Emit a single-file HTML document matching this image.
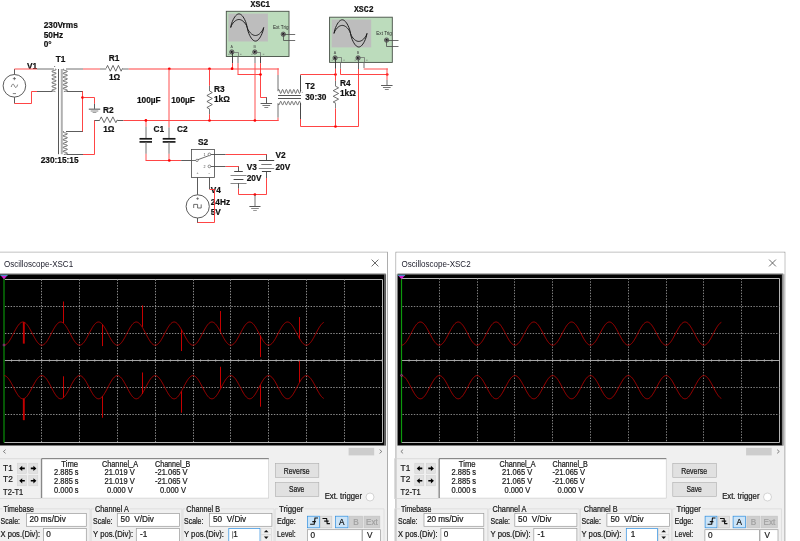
<!DOCTYPE html>
<html lang="en">
<head>
<meta charset="utf-8">
<title>Multisim oscilloscopes</title>
<style>
html,body{margin:0;padding:0;background:#fff;}
body{width:800px;height:541px;overflow:hidden;font-family:"Liberation Sans",Arial,sans-serif;}
svg{display:block;position:absolute;left:0;top:0;will-change:transform;}
text{white-space:pre;}
</style>
</head>
<body>
<svg width="800" height="541" viewBox="0 0 800 541">
<rect x="0" y="0" width="800" height="541" fill="#fff"/>
<text x="43.70" y="28.00" font-family="Liberation Sans, Arial, sans-serif" font-size="8.3" font-weight="bold" fill="#111" text-anchor="start"  stroke="#111" stroke-width="0.18">230Vrms</text>
<text x="43.70" y="37.50" font-family="Liberation Sans, Arial, sans-serif" font-size="8.3" font-weight="bold" fill="#111" text-anchor="start"  stroke="#111" stroke-width="0.18">50Hz</text>
<text x="43.70" y="47.00" font-family="Liberation Sans, Arial, sans-serif" font-size="8.3" font-weight="bold" fill="#111" text-anchor="start"  stroke="#111" stroke-width="0.18">0°</text>
<text x="27.00" y="68.50" font-family="Liberation Sans, Arial, sans-serif" font-size="8.3" font-weight="bold" fill="#111" text-anchor="start"  stroke="#111" stroke-width="0.18">V1</text>
<text x="55.70" y="62.00" font-family="Liberation Sans, Arial, sans-serif" font-size="8.3" font-weight="bold" fill="#111" text-anchor="start"  stroke="#111" stroke-width="0.18">T1</text>
<text x="108.70" y="61.00" font-family="Liberation Sans, Arial, sans-serif" font-size="8.3" font-weight="bold" fill="#111" text-anchor="start"  stroke="#111" stroke-width="0.18">R1</text>
<text x="109.00" y="79.50" font-family="Liberation Sans, Arial, sans-serif" font-size="8.3" font-weight="bold" fill="#111" text-anchor="start"  stroke="#111" stroke-width="0.18">1Ω</text>
<text x="102.90" y="112.50" font-family="Liberation Sans, Arial, sans-serif" font-size="8.3" font-weight="bold" fill="#111" text-anchor="start"  stroke="#111" stroke-width="0.18">R2</text>
<text x="103.20" y="131.70" font-family="Liberation Sans, Arial, sans-serif" font-size="8.3" font-weight="bold" fill="#111" text-anchor="start"  stroke="#111" stroke-width="0.18">1Ω</text>
<text x="137.00" y="103.00" font-family="Liberation Sans, Arial, sans-serif" font-size="8.3" font-weight="bold" fill="#111" text-anchor="start"  stroke="#111" stroke-width="0.18">100µF</text>
<text x="171.20" y="103.00" font-family="Liberation Sans, Arial, sans-serif" font-size="8.3" font-weight="bold" fill="#111" text-anchor="start"  stroke="#111" stroke-width="0.18">100µF</text>
<text x="153.60" y="132.00" font-family="Liberation Sans, Arial, sans-serif" font-size="8.3" font-weight="bold" fill="#111" text-anchor="start"  stroke="#111" stroke-width="0.18">C1</text>
<text x="177.00" y="132.00" font-family="Liberation Sans, Arial, sans-serif" font-size="8.3" font-weight="bold" fill="#111" text-anchor="start"  stroke="#111" stroke-width="0.18">C2</text>
<text x="40.70" y="163.20" font-family="Liberation Sans, Arial, sans-serif" font-size="8.3" font-weight="bold" fill="#111" text-anchor="start"  stroke="#111" stroke-width="0.18">230:15:15</text>
<text x="214.00" y="91.50" font-family="Liberation Sans, Arial, sans-serif" font-size="8.3" font-weight="bold" fill="#111" text-anchor="start"  stroke="#111" stroke-width="0.18">R3</text>
<text x="214.00" y="101.80" font-family="Liberation Sans, Arial, sans-serif" font-size="8.3" font-weight="bold" fill="#111" text-anchor="start"  stroke="#111" stroke-width="0.18">1kΩ</text>
<text x="305.20" y="89.20" font-family="Liberation Sans, Arial, sans-serif" font-size="8.3" font-weight="bold" fill="#111" text-anchor="start"  stroke="#111" stroke-width="0.18">T2</text>
<text x="305.20" y="100.20" font-family="Liberation Sans, Arial, sans-serif" font-size="8.3" font-weight="bold" fill="#111" text-anchor="start"  stroke="#111" stroke-width="0.18">30:30</text>
<text x="340.00" y="85.80" font-family="Liberation Sans, Arial, sans-serif" font-size="8.3" font-weight="bold" fill="#111" text-anchor="start"  stroke="#111" stroke-width="0.18">R4</text>
<text x="340.00" y="95.80" font-family="Liberation Sans, Arial, sans-serif" font-size="8.3" font-weight="bold" fill="#111" text-anchor="start"  stroke="#111" stroke-width="0.18">1kΩ</text>
<text x="198.00" y="144.50" font-family="Liberation Sans, Arial, sans-serif" font-size="8.3" font-weight="bold" fill="#111" text-anchor="start"  stroke="#111" stroke-width="0.18">S2</text>
<text x="275.50" y="157.50" font-family="Liberation Sans, Arial, sans-serif" font-size="8.3" font-weight="bold" fill="#111" text-anchor="start"  stroke="#111" stroke-width="0.18">V2</text>
<text x="275.50" y="169.50" font-family="Liberation Sans, Arial, sans-serif" font-size="8.3" font-weight="bold" fill="#111" text-anchor="start"  stroke="#111" stroke-width="0.18">20V</text>
<text x="246.70" y="169.50" font-family="Liberation Sans, Arial, sans-serif" font-size="8.3" font-weight="bold" fill="#111" text-anchor="start"  stroke="#111" stroke-width="0.18">V3</text>
<text x="246.70" y="181.20" font-family="Liberation Sans, Arial, sans-serif" font-size="8.3" font-weight="bold" fill="#111" text-anchor="start"  stroke="#111" stroke-width="0.18">20V</text>
<text x="210.70" y="193.00" font-family="Liberation Sans, Arial, sans-serif" font-size="8.3" font-weight="bold" fill="#111" text-anchor="start"  stroke="#111" stroke-width="0.18">V4</text>
<text x="210.70" y="204.50" font-family="Liberation Sans, Arial, sans-serif" font-size="8.3" font-weight="bold" fill="#111" text-anchor="start"  stroke="#111" stroke-width="0.18">24Hz</text>
<text x="210.70" y="215.00" font-family="Liberation Sans, Arial, sans-serif" font-size="8.3" font-weight="bold" fill="#111" text-anchor="start"  stroke="#111" stroke-width="0.18">5V</text>
<circle cx="14.4" cy="85.8" r="11.3" fill="none" stroke="#4a4a4a" stroke-width="0.9"/>
<path d="M14.50 74.50 L14.50 69.00" stroke="#4a4a4a" stroke-width="0.9" fill="none" />
<path d="M14.50 97.10 L14.50 103.40" stroke="#4a4a4a" stroke-width="0.9" fill="none" />
<path d="M12.80 78.60 L16.00 78.60" stroke="#4a4a4a" stroke-width="0.7" fill="none" />
<path d="M14.40 77.00 L14.40 80.20" stroke="#4a4a4a" stroke-width="0.7" fill="none" />
<path d="M12.80 93.60 L16.00 93.60" stroke="#4a4a4a" stroke-width="0.7" fill="none" />
<path d="M11.2 87.0 C12.2 83.2 13.6 83.6 14.4 85.8 C15.200000000000001 88.0 16.6 88.39999999999999 17.6 84.6" stroke="#4a4a4a" stroke-width="0.7" fill="none"/>
<path d="M14.40 69.00 L37.00 69.00" stroke="#ff5050" stroke-width="1.0" fill="none" />
<path d="M37.00 69.00 L54.00 69.00" stroke="#707070" stroke-width="1.0" fill="none" />
<path d="M14.40 103.50 L31.50 103.50 L31.50 91.50 L37.00 91.50" stroke="#ff3030" stroke-width="0.9" fill="none" />
<path d="M37.00 91.50 L52.50 91.50" stroke="#4a4a4a" stroke-width="0.9" fill="none" />
<path d="M55.37 69.00 L56.05 69.31 L56.18 69.63 L55.72 69.94 L54.81 70.26 L53.68 70.57 L52.63 70.88 L51.95 71.20 L51.82 71.51 L52.28 71.83 L53.19 72.14 L54.32 72.45 L55.37 72.77 L56.05 73.08 L56.18 73.39 L55.72 73.71 L54.81 74.02 L53.68 74.34 L52.63 74.65 L51.95 74.96 L51.82 75.28 L52.28 75.59 L53.19 75.91 L54.32 76.22 L55.37 76.53 L56.05 76.85 L56.18 77.16 L55.72 77.47 L54.81 77.79 L53.68 78.10 L52.63 78.42 L51.95 78.73 L51.82 79.04 L52.28 79.36 L53.19 79.67 L54.32 79.99 L55.37 80.30 L56.05 80.61 L56.18 80.93 L55.72 81.24 L54.81 81.56 L53.68 81.87 L52.63 82.18 L51.95 82.50 L51.82 82.81 L52.28 83.12 L53.19 83.44 L54.32 83.75 L55.37 84.07 L56.05 84.38 L56.18 84.69 L55.72 85.01 L54.81 85.32 L53.68 85.64 L52.63 85.95 L51.95 86.26 L51.82 86.58 L52.28 86.89 L53.19 87.21 L54.32 87.52 L55.37 87.83 L56.05 88.15 L56.18 88.46 L55.72 88.77 L54.81 89.09 L53.68 89.40 L52.63 89.72 L51.95 90.03 L51.82 90.34 L52.28 90.66 L53.19 90.97 L54.32 91.29 L55.37 91.60" stroke="#4a4a4a" stroke-width="0.8" fill="none" />
<path d="M58.50 69.00 L58.50 154.20" stroke="#444" stroke-width="0.9" fill="none" />
<path d="M61.80 69.00 L61.80 154.20" stroke="#b0b0b0" stroke-width="2.0" fill="none" />
<path d="M63.83 69.00 L63.15 69.31 L63.02 69.63 L63.48 69.94 L64.39 70.26 L65.52 70.57 L66.57 70.88 L67.25 71.20 L67.38 71.51 L66.92 71.83 L66.01 72.14 L64.88 72.45 L63.83 72.77 L63.15 73.08 L63.02 73.39 L63.48 73.71 L64.39 74.02 L65.52 74.34 L66.57 74.65 L67.25 74.96 L67.38 75.28 L66.92 75.59 L66.01 75.91 L64.88 76.22 L63.83 76.53 L63.15 76.85 L63.02 77.16 L63.48 77.47 L64.39 77.79 L65.52 78.10 L66.57 78.42 L67.25 78.73 L67.38 79.04 L66.92 79.36 L66.01 79.67 L64.88 79.99 L63.83 80.30 L63.15 80.61 L63.02 80.93 L63.48 81.24 L64.39 81.56 L65.52 81.87 L66.57 82.18 L67.25 82.50 L67.38 82.81 L66.92 83.12 L66.01 83.44 L64.88 83.75 L63.83 84.07 L63.15 84.38 L63.02 84.69 L63.48 85.01 L64.39 85.32 L65.52 85.64 L66.57 85.95 L67.25 86.26 L67.38 86.58 L66.92 86.89 L66.01 87.21 L64.88 87.52 L63.83 87.83 L63.15 88.15 L63.02 88.46 L63.48 88.77 L64.39 89.09 L65.52 89.40 L66.57 89.72 L67.25 90.03 L67.38 90.34 L66.92 90.66 L66.01 90.97 L64.88 91.29 L63.83 91.60" stroke="#4a4a4a" stroke-width="0.8" fill="none" />
<path d="M63.83 131.40 L63.15 131.72 L63.02 132.04 L63.48 132.37 L64.39 132.69 L65.52 133.01 L66.57 133.33 L67.25 133.66 L67.38 133.98 L66.92 134.30 L66.01 134.62 L64.88 134.94 L63.83 135.27 L63.15 135.59 L63.02 135.91 L63.48 136.23 L64.39 136.56 L65.52 136.88 L66.57 137.20 L67.25 137.52 L67.38 137.84 L66.92 138.17 L66.01 138.49 L64.88 138.81 L63.83 139.13 L63.15 139.46 L63.02 139.78 L63.48 140.10 L64.39 140.42 L65.52 140.74 L66.57 141.07 L67.25 141.39 L67.38 141.71 L66.92 142.03 L66.01 142.36 L64.88 142.68 L63.83 143.00 L63.15 143.32 L63.02 143.64 L63.48 143.97 L64.39 144.29 L65.52 144.61 L66.57 144.93 L67.25 145.26 L67.38 145.58 L66.92 145.90 L66.01 146.22 L64.88 146.54 L63.83 146.87 L63.15 147.19 L63.02 147.51 L63.48 147.83 L64.39 148.16 L65.52 148.48 L66.57 148.80 L67.25 149.12 L67.38 149.44 L66.92 149.77 L66.01 150.09 L64.88 150.41 L63.83 150.73 L63.15 151.06 L63.02 151.38 L63.48 151.70 L64.39 152.02 L65.52 152.34 L66.57 152.67 L67.25 152.99 L67.38 153.31 L66.92 153.63 L66.01 153.96 L64.88 154.28 L63.83 154.60" stroke="#4a4a4a" stroke-width="0.8" fill="none" />
<circle cx="54.7" cy="66.4" r="0.5" fill="#444"/>
<path d="M66.00 69.00 L83.00 69.00" stroke="#707070" stroke-width="1.0" fill="none" />
<path d="M66.50 91.50 L83.00 91.50" stroke="#4a4a4a" stroke-width="0.9" fill="none" />
<path d="M66.00 131.50 L83.00 131.50" stroke="#4a4a4a" stroke-width="0.9" fill="none" />
<path d="M66.50 154.50 L83.00 154.50" stroke="#4a4a4a" stroke-width="0.9" fill="none" />
<path d="M82.50 91.20 L82.50 131.40" stroke="#ff3030" stroke-width="0.9" fill="none" />
<circle cx="82.50" cy="97.50" r="1.35" fill="#ff0000"/>
<path d="M82.90 97.50 L94.50 97.50 L94.50 103.80" stroke="#ff3030" stroke-width="0.9" fill="none" />
<path d="M94.50 103.80 L94.50 109.00" stroke="#4a4a4a" stroke-width="0.9" fill="none" />
<path d="M88.80 109.20 L100.20 109.20" stroke="#777" stroke-width="1.3" fill="none" />
<path d="M90.70 111.00 L98.30 111.00" stroke="#8a8a8a" stroke-width="1.0" fill="none" />
<path d="M92.60 112.50 L96.40 112.50" stroke="#a0a0a0" stroke-width="1.0" fill="none" />
<path d="M83.00 69.00 L100.00 69.00" stroke="#ff5050" stroke-width="1.0" fill="none" />
<path d="M100.00 69.00 L106.20 69.00" stroke="#707070" stroke-width="1.0" fill="none" />
<path d="M106.20 68.30 L107.56 65.40 L110.28 71.20 L112.99 65.40 L115.71 71.20 L118.42 65.40 L121.14 71.20 L122.50 68.30" stroke="#4a4a4a" stroke-width="0.8" fill="none" />
<path d="M122.50 69.00 L128.70 69.00" stroke="#707070" stroke-width="1.0" fill="none" />
<path d="M128.70 68.95 L278.80 68.95" stroke="#ff4040" stroke-width="1.1" fill="none" />
<path d="M278.00 68.30 L278.00 75.00" stroke="#ff5050" stroke-width="1.0" fill="none" />
<path d="M278.00 75.00 L278.00 91.20" stroke="#707070" stroke-width="1.0" fill="none" />
<path d="M83.00 154.50 L94.50 154.50 L94.50 120.20" stroke="#ff3030" stroke-width="0.9" fill="none" />
<path d="M94.60 120.50 L99.80 120.50" stroke="#4a4a4a" stroke-width="0.9" fill="none" />
<path d="M99.80 119.80 L101.26 116.90 L104.17 122.70 L107.09 116.90 L110.01 122.70 L112.92 116.90 L115.84 122.70 L117.30 119.80" stroke="#4a4a4a" stroke-width="0.8" fill="none" />
<path d="M117.30 120.50 L123.50 120.50" stroke="#4a4a4a" stroke-width="0.9" fill="none" />
<path d="M123.50 120.50 L278.60 120.50" stroke="#ff3030" stroke-width="0.9" fill="none" />
<path d="M278.00 120.80 L278.00 117.50" stroke="#ff5050" stroke-width="1.0" fill="none" />
<path d="M278.00 117.50 L278.00 103.20" stroke="#707070" stroke-width="1.0" fill="none" />
<path d="M146.00 120.20 L146.00 126.60" stroke="#ff5050" stroke-width="1.0" fill="none" />
<path d="M146.00 126.60 L146.00 138.60" stroke="#707070" stroke-width="1.0" fill="none" />
<circle cx="145.90" cy="120.40" r="1.35" fill="#ff0000"/>
<path d="M139.50 138.80 L152.00 138.80" stroke="#1a1a1a" stroke-width="1.7" fill="none" />
<path d="M139.50 141.90 L152.00 141.90" stroke="#1a1a1a" stroke-width="1.7" fill="none" />
<path d="M146.00 142.00 L146.00 153.80" stroke="#707070" stroke-width="1.0" fill="none" />
<path d="M146.00 153.80 L146.00 160.10" stroke="#ff5050" stroke-width="1.0" fill="none" />
<path d="M145.50 160.50 L181.20 160.50" stroke="#ff3030" stroke-width="0.9" fill="none" />
<path d="M181.20 160.50 L196.00 160.50" stroke="#4a4a4a" stroke-width="0.9" fill="none" />
<circle cx="169.30" cy="68.80" r="1.35" fill="#ff0000"/>
<path d="M169.00 69.00 L169.00 127.50" stroke="#ff5050" stroke-width="1.0" fill="none" />
<path d="M169.00 127.50 L169.00 138.60" stroke="#707070" stroke-width="1.0" fill="none" />
<path d="M162.70 138.80 L175.50 138.80" stroke="#1a1a1a" stroke-width="1.7" fill="none" />
<path d="M162.70 141.90 L175.50 141.90" stroke="#1a1a1a" stroke-width="1.7" fill="none" />
<path d="M169.00 142.00 L169.00 153.80" stroke="#707070" stroke-width="1.0" fill="none" />
<path d="M169.00 153.80 L169.00 160.10" stroke="#ff5050" stroke-width="1.0" fill="none" />
<circle cx="169.30" cy="160.50" r="1.35" fill="#ff0000"/>
<circle cx="209.50" cy="68.80" r="1.35" fill="#ff0000"/>
<circle cx="209.50" cy="120.50" r="1.35" fill="#ff0000"/>
<path d="M209.50 69.00 L209.50 85.80" stroke="#ff3030" stroke-width="0.9" fill="none" />
<path d="M209.50 85.80 L209.50 91.00" stroke="#666" stroke-width="0.9" fill="none" />
<path d="M209.60 91.00 L212.30 92.50 L206.90 95.50 L212.30 98.50 L206.90 101.50 L212.30 104.50 L206.90 107.50 L209.60 109.00" stroke="#4a4a4a" stroke-width="0.8" fill="none" />
<path d="M209.50 109.00 L209.50 114.20" stroke="#666" stroke-width="0.9" fill="none" />
<path d="M209.50 114.20 L209.50 120.20" stroke="#ff3030" stroke-width="0.9" fill="none" />
<rect x="226.30" y="11.30" width="62.7" height="45.2" fill="#bcdcbc" stroke="#454f45" stroke-width="0.9"/>
<rect x="228.40" y="13.60" width="39.5" height="27.9" fill="#bdbdbd"/>
<path d="M230.70 27.50 L231.52 23.79 L232.35 21.52 L233.17 19.68 L234.00 18.12 L234.82 16.83 L235.65 15.78 L236.47 14.96 L237.30 14.37 L238.12 14.02 L238.95 13.90 L239.77 14.02 L240.60 14.37 L241.42 14.96 L242.25 15.78 L243.07 16.83 L243.90 18.12 L244.72 19.68 L245.55 21.52 L246.38 23.79 L247.20 27.50 L248.02 31.21 L248.85 33.48 L249.67 35.32 L250.50 36.88 L251.32 38.17 L252.15 39.22 L252.97 40.04 L253.80 40.63 L254.62 40.98 L255.45 41.10 L256.27 40.98 L257.10 40.63 L257.93 40.04 L258.75 39.22 L259.57 38.17 L260.40 36.88 L261.22 35.32 L262.05 33.48 L262.88 31.21 L263.70 27.50" stroke="#1a1a1a" stroke-width="0.95" fill="none" />
<path d="M230.70 27.50 L231.52 25.32 L232.35 23.98 L233.17 22.90 L234.00 21.99 L234.82 21.22 L235.65 20.60 L236.47 20.12 L237.30 19.78 L238.12 19.57 L238.95 19.50 L239.77 19.57 L240.60 19.78 L241.42 20.12 L242.25 20.60 L243.07 21.22 L243.90 21.99 L244.72 22.90 L245.55 23.98 L246.38 25.32 L247.20 27.50 L248.02 29.68 L248.85 31.02 L249.67 32.10 L250.50 33.01 L251.32 33.78 L252.15 34.40 L252.97 34.88 L253.80 35.22 L254.62 35.43 L255.45 35.50 L256.27 35.43 L257.10 35.22 L257.93 34.88 L258.75 34.40 L259.57 33.78 L260.40 33.01 L261.22 32.10 L262.05 31.02 L262.88 29.68 L263.70 27.50" stroke="#1a1a1a" stroke-width="0.95" fill="none" />
<text x="250.60" y="6.50" font-family="Liberation Mono, Courier New, monospace" font-size="8.2" font-weight="bold" fill="#111" text-anchor="start"  stroke="#111" stroke-width="0.18">XSC1</text>
<text x="273.00" y="28.80" font-family="Liberation Sans, Arial, sans-serif" font-size="4.6" font-weight="normal" fill="#2a2a2a" text-anchor="start" >Ext Trig</text>
<text x="230.40" y="47.60" font-family="Liberation Sans, Arial, sans-serif" font-size="3.6" font-weight="normal" fill="#444" text-anchor="start" >A</text>
<text x="253.50" y="47.60" font-family="Liberation Sans, Arial, sans-serif" font-size="3.6" font-weight="normal" fill="#444" text-anchor="start" >B</text>
<circle cx="231.80" cy="52.00" r="2.2" fill="#8a8a8a" stroke="#333" stroke-width="0.6"/>
<circle cx="231.80" cy="52.00" r="1.1" fill="#111"/>
<circle cx="254.80" cy="52.00" r="2.2" fill="#8a8a8a" stroke="#333" stroke-width="0.6"/>
<circle cx="254.80" cy="52.00" r="1.1" fill="#111"/>
<circle cx="283.30" cy="34.20" r="2.2" fill="#8a8a8a" stroke="#333" stroke-width="0.6"/>
<circle cx="283.30" cy="34.20" r="1.1" fill="#111"/>
<path d="M283.30 34.50 L295.20 34.50" stroke="#4a4a4a" stroke-width="0.8" fill="none" />
<path d="M283.50 34.20 L283.50 40.50 L295.20 40.50" stroke="#4a4a4a" stroke-width="0.8" fill="none" />
<path d="M231.80 52.50 L238.50 52.50 L238.50 56.50" stroke="#666" stroke-width="0.7" fill="none" />
<path d="M254.80 52.50 L260.50 52.50 L260.50 56.50" stroke="#666" stroke-width="0.7" fill="none" />
<path d="M228.20 54.30 L229.70 54.30" stroke="#555" stroke-width="0.5" fill="none" />
<path d="M240.00 54.30 L241.50 54.30" stroke="#555" stroke-width="0.5" fill="none" />
<path d="M251.20 54.30 L252.70 54.30" stroke="#555" stroke-width="0.5" fill="none" />
<path d="M262.80 54.30 L264.30 54.30" stroke="#555" stroke-width="0.5" fill="none" />
<rect x="329.60" y="17.20" width="62.7" height="45.2" fill="#bcdcbc" stroke="#454f45" stroke-width="0.9"/>
<rect x="331.70" y="19.50" width="39.5" height="27.9" fill="#bdbdbd"/>
<path d="M334.00 33.40 L334.82 29.69 L335.65 27.42 L336.48 25.58 L337.30 24.02 L338.12 22.73 L338.95 21.68 L339.77 20.86 L340.60 20.27 L341.43 19.92 L342.25 19.80 L343.07 19.92 L343.90 20.27 L344.73 20.86 L345.55 21.68 L346.38 22.73 L347.20 24.02 L348.02 25.58 L348.85 27.42 L349.68 29.69 L350.50 33.40 L351.32 37.11 L352.15 39.38 L352.98 41.22 L353.80 42.78 L354.62 44.07 L355.45 45.12 L356.27 45.94 L357.10 46.53 L357.93 46.88 L358.75 47.00 L359.57 46.88 L360.40 46.53 L361.23 45.94 L362.05 45.12 L362.88 44.07 L363.70 42.78 L364.52 41.22 L365.35 39.38 L366.18 37.11 L367.00 33.40" stroke="#1a1a1a" stroke-width="0.95" fill="none" />
<path d="M334.00 33.40 L334.82 31.22 L335.65 29.88 L336.48 28.80 L337.30 27.89 L338.12 27.12 L338.95 26.50 L339.77 26.02 L340.60 25.68 L341.43 25.47 L342.25 25.40 L343.07 25.47 L343.90 25.68 L344.73 26.02 L345.55 26.50 L346.38 27.12 L347.20 27.89 L348.02 28.80 L348.85 29.88 L349.68 31.22 L350.50 33.40 L351.32 35.58 L352.15 36.92 L352.98 38.00 L353.80 38.91 L354.62 39.68 L355.45 40.30 L356.27 40.78 L357.10 41.12 L357.93 41.33 L358.75 41.40 L359.57 41.33 L360.40 41.12 L361.23 40.78 L362.05 40.30 L362.88 39.68 L363.70 38.91 L364.52 38.00 L365.35 36.92 L366.18 35.58 L367.00 33.40" stroke="#1a1a1a" stroke-width="0.95" fill="none" />
<text x="353.90" y="12.40" font-family="Liberation Mono, Courier New, monospace" font-size="8.2" font-weight="bold" fill="#111" text-anchor="start"  stroke="#111" stroke-width="0.18">XSC2</text>
<text x="376.30" y="34.70" font-family="Liberation Sans, Arial, sans-serif" font-size="4.6" font-weight="normal" fill="#2a2a2a" text-anchor="start" >Ext Trig</text>
<text x="333.70" y="53.50" font-family="Liberation Sans, Arial, sans-serif" font-size="3.6" font-weight="normal" fill="#444" text-anchor="start" >A</text>
<text x="356.80" y="53.50" font-family="Liberation Sans, Arial, sans-serif" font-size="3.6" font-weight="normal" fill="#444" text-anchor="start" >B</text>
<circle cx="335.10" cy="57.90" r="2.2" fill="#8a8a8a" stroke="#333" stroke-width="0.6"/>
<circle cx="335.10" cy="57.90" r="1.1" fill="#111"/>
<circle cx="358.10" cy="57.90" r="2.2" fill="#8a8a8a" stroke="#333" stroke-width="0.6"/>
<circle cx="358.10" cy="57.90" r="1.1" fill="#111"/>
<circle cx="386.60" cy="40.10" r="2.2" fill="#8a8a8a" stroke="#333" stroke-width="0.6"/>
<circle cx="386.60" cy="40.10" r="1.1" fill="#111"/>
<path d="M386.60 40.50 L398.50 40.50" stroke="#4a4a4a" stroke-width="0.8" fill="none" />
<path d="M386.50 40.10 L386.50 46.50 L398.50 46.50" stroke="#4a4a4a" stroke-width="0.8" fill="none" />
<path d="M335.10 57.50 L341.50 57.50 L341.50 62.40" stroke="#666" stroke-width="0.7" fill="none" />
<path d="M358.10 57.50 L364.50 57.50 L364.50 62.40" stroke="#666" stroke-width="0.7" fill="none" />
<path d="M331.50 60.20 L333.00 60.20" stroke="#555" stroke-width="0.5" fill="none" />
<path d="M343.30 60.20 L344.80 60.20" stroke="#555" stroke-width="0.5" fill="none" />
<path d="M354.50 60.20 L356.00 60.20" stroke="#555" stroke-width="0.5" fill="none" />
<path d="M366.10 60.20 L367.60 60.20" stroke="#555" stroke-width="0.5" fill="none" />
<path d="M232.50 52.50 L232.50 63.20" stroke="#333" stroke-width="0.9" fill="none" />
<path d="M232.50 63.20 L232.50 69.00" stroke="#ff3030" stroke-width="0.9" fill="none" />
<circle cx="232.10" cy="68.70" r="1.35" fill="#ff0000"/>
<path d="M238.00 56.50 L238.00 63.20" stroke="#707070" stroke-width="1.0" fill="none" />
<path d="M238.00 63.20 L238.00 74.20" stroke="#ff4a4a" stroke-width="1.0" fill="none" />
<path d="M237.50 74.50 L260.70 74.50" stroke="#ff3030" stroke-width="0.9" fill="none" />
<path d="M255.00 56.50 L255.00 63.20" stroke="#707070" stroke-width="1.0" fill="none" />
<path d="M255.00 63.20 L255.00 120.20" stroke="#ff5050" stroke-width="1.0" fill="none" />
<circle cx="254.90" cy="120.50" r="1.35" fill="#ff0000"/>
<path d="M260.50 56.50 L260.50 63.20" stroke="#333" stroke-width="0.9" fill="none" />
<path d="M260.50 63.20 L260.50 97.50 L266.30 97.50" stroke="#ff3030" stroke-width="0.9" fill="none" />
<circle cx="260.50" cy="74.50" r="1.35" fill="#ff0000"/>
<path d="M266.50 97.20 L266.50 103.40" stroke="#4a4a4a" stroke-width="0.9" fill="none" />
<path d="M260.55 103.50 L272.05 103.50" stroke="#4a4a4a" stroke-width="0.9" fill="none" />
<path d="M262.45 105.50 L270.15 105.50" stroke="#666" stroke-width="0.9" fill="none" />
<path d="M264.35 107.50 L268.25 107.50" stroke="#777" stroke-width="0.9" fill="none" />
<path d="M278.30 90.26 L278.61 89.64 L278.93 89.52 L279.24 89.93 L279.55 90.76 L279.86 91.79 L280.18 92.74 L280.49 93.36 L280.80 93.48 L281.11 93.07 L281.43 92.24 L281.74 91.21 L282.05 90.26 L282.36 89.64 L282.68 89.52 L282.99 89.93 L283.30 90.76 L283.61 91.79 L283.93 92.74 L284.24 93.36 L284.55 93.48 L284.86 93.07 L285.18 92.24 L285.49 91.21 L285.80 90.26 L286.11 89.64 L286.43 89.52 L286.74 89.93 L287.05 90.76 L287.36 91.79 L287.68 92.74 L287.99 93.36 L288.30 93.48 L288.61 93.07 L288.93 92.24 L289.24 91.21 L289.55 90.26 L289.86 89.64 L290.18 89.52 L290.49 89.93 L290.80 90.76 L291.11 91.79 L291.43 92.74 L291.74 93.36 L292.05 93.48 L292.36 93.07 L292.68 92.24 L292.99 91.21 L293.30 90.26 L293.61 89.64 L293.93 89.52 L294.24 89.93 L294.55 90.76 L294.86 91.79 L295.18 92.74 L295.49 93.36 L295.80 93.48 L296.11 93.07 L296.43 92.24 L296.74 91.21 L297.05 90.26 L297.36 89.64 L297.68 89.52 L297.99 89.93 L298.30 90.76 L298.61 91.79 L298.93 92.74 L299.24 93.36 L299.55 93.48 L299.86 93.07 L300.18 92.24 L300.49 91.21 L300.80 90.26" stroke="#4a4a4a" stroke-width="0.8" fill="none" />
<path d="M278.00 95.50 L301.00 95.50" stroke="#555" stroke-width="1.0" fill="none" />
<path d="M278.00 98.50 L301.00 98.50" stroke="#555" stroke-width="1.0" fill="none" />
<path d="M278.30 104.22 L278.61 104.77 L278.93 104.88 L279.24 104.51 L279.55 103.76 L279.86 102.84 L280.18 101.98 L280.49 101.43 L280.80 101.32 L281.11 101.69 L281.43 102.44 L281.74 103.36 L282.05 104.22 L282.36 104.77 L282.68 104.88 L282.99 104.51 L283.30 103.76 L283.61 102.84 L283.93 101.98 L284.24 101.43 L284.55 101.32 L284.86 101.69 L285.18 102.44 L285.49 103.36 L285.80 104.22 L286.11 104.77 L286.43 104.88 L286.74 104.51 L287.05 103.76 L287.36 102.84 L287.68 101.98 L287.99 101.43 L288.30 101.32 L288.61 101.69 L288.93 102.44 L289.24 103.36 L289.55 104.22 L289.86 104.77 L290.18 104.88 L290.49 104.51 L290.80 103.76 L291.11 102.84 L291.43 101.98 L291.74 101.43 L292.05 101.32 L292.36 101.69 L292.68 102.44 L292.99 103.36 L293.30 104.22 L293.61 104.77 L293.93 104.88 L294.24 104.51 L294.55 103.76 L294.86 102.84 L295.18 101.98 L295.49 101.43 L295.80 101.32 L296.11 101.69 L296.43 102.44 L296.74 103.36 L297.05 104.22 L297.36 104.77 L297.68 104.88 L297.99 104.51 L298.30 103.76 L298.61 102.84 L298.93 101.98 L299.24 101.43 L299.55 101.32 L299.86 101.69 L300.18 102.44 L300.49 103.36 L300.80 104.22" stroke="#4a4a4a" stroke-width="0.8" fill="none" />
<circle cx="302.2" cy="92.2" r="0.45" fill="#444"/>
<path d="M300.50 91.40 L300.50 75.20" stroke="#333" stroke-width="0.9" fill="none" />
<path d="M300.30 74.50 L335.30 74.50" stroke="#ff3030" stroke-width="0.9" fill="none" />
<path d="M300.50 103.20 L300.50 119.00" stroke="#333" stroke-width="0.9" fill="none" />
<path d="M300.50 119.00 L300.50 126.50 L358.50 126.50 L358.50 69.00" stroke="#ff3030" stroke-width="0.9" fill="none" />
<circle cx="335.50" cy="74.50" r="1.35" fill="#ff0000"/>
<circle cx="335.50" cy="126.50" r="1.35" fill="#ff0000"/>
<path d="M335.50 74.50 L335.50 80.80" stroke="#ff3030" stroke-width="0.9" fill="none" />
<path d="M335.50 80.80 L335.50 86.40" stroke="#666" stroke-width="0.9" fill="none" />
<path d="M335.90 86.40 L338.60 87.82 L333.20 90.65 L338.60 93.48 L333.20 96.32 L338.60 99.15 L333.20 101.98 L335.90 103.40" stroke="#4a4a4a" stroke-width="0.8" fill="none" />
<path d="M335.50 103.40 L335.50 108.40" stroke="#777" stroke-width="0.9" fill="none" />
<path d="M335.50 108.40 L335.50 126.00" stroke="#ff3030" stroke-width="0.9" fill="none" />
<path d="M335.50 58.30 L335.50 68.80" stroke="#333" stroke-width="0.9" fill="none" />
<path d="M335.50 68.80 L335.50 74.50" stroke="#ff3030" stroke-width="0.9" fill="none" />
<path d="M340.50 62.40 L340.50 68.80" stroke="#777" stroke-width="0.9" fill="none" />
<path d="M340.50 68.80 L340.50 74.50 L387.20 74.50" stroke="#ff3030" stroke-width="0.9" fill="none" />
<circle cx="387.20" cy="74.50" r="1.35" fill="#ff0000"/>
<path d="M358.50 58.30 L358.50 69.00" stroke="#555" stroke-width="0.9" fill="none" />
<path d="M364.00 62.40 L364.00 68.00" stroke="#707070" stroke-width="1.0" fill="none" />
<path d="M363.70 69.00 L387.90 69.00" stroke="#ff5050" stroke-width="1.0" fill="none" />
<path d="M387.00 68.50 L387.00 80.00" stroke="#ff5050" stroke-width="1.0" fill="none" />
<path d="M387.00 80.00 L387.00 85.40" stroke="#707070" stroke-width="1.0" fill="none" />
<path d="M381.05 85.50 L392.55 85.50" stroke="#4a4a4a" stroke-width="0.9" fill="none" />
<path d="M382.95 87.50 L390.65 87.50" stroke="#666" stroke-width="0.9" fill="none" />
<path d="M384.85 89.50 L388.75 89.50" stroke="#777" stroke-width="0.9" fill="none" />
<rect x="191.5" y="149.5" width="23" height="28" fill="#fff" stroke="#4a4a4a" stroke-width="0.8"/>
<path d="M191.30 160.50 L196.00 160.50" stroke="#4a4a4a" stroke-width="0.8" fill="none" />
<path d="M197.60 159.80 L210.60 155.00" stroke="#4a4a4a" stroke-width="0.8" fill="none" />
<circle cx="209.4" cy="154.4" r="1.35" fill="#fff" stroke="#4a4a4a" stroke-width="0.6"/>
<circle cx="209.4" cy="166.4" r="1.35" fill="#fff" stroke="#4a4a4a" stroke-width="0.6"/>
<circle cx="197.0" cy="160.4" r="1.2" fill="#fff" stroke="#4a4a4a" stroke-width="0.6"/>
<text x="203.60" y="155.80" font-family="Liberation Sans, Arial, sans-serif" font-size="3.6" font-weight="normal" fill="#444" text-anchor="start" >1</text>
<text x="203.60" y="167.70" font-family="Liberation Sans, Arial, sans-serif" font-size="3.6" font-weight="normal" fill="#444" text-anchor="start" >2</text>
<text x="196.60" y="174.20" font-family="Liberation Sans, Arial, sans-serif" font-size="3.6" font-weight="normal" fill="#444" text-anchor="start" >+</text>
<text x="208.40" y="173.80" font-family="Liberation Sans, Arial, sans-serif" font-size="3.6" font-weight="normal" fill="#444" text-anchor="start" >-</text>
<path d="M210.80 154.50 L225.70 154.50" stroke="#4a4a4a" stroke-width="0.9" fill="none" />
<path d="M225.70 154.50 L267.00 154.50" stroke="#ff3030" stroke-width="0.9" fill="none" />
<path d="M266.50 154.80 L266.50 160.30" stroke="#4a4a4a" stroke-width="0.9" fill="none" />
<path d="M258.80 160.50 L274.20 160.50" stroke="#444" stroke-width="1.0" fill="none" />
<path d="M261.30 164.50 L271.70 164.50" stroke="#777" stroke-width="1.0" fill="none" />
<path d="M258.80 168.50 L274.20 168.50" stroke="#888" stroke-width="1.0" fill="none" />
<path d="M261.90 171.50 L271.10 171.50" stroke="#444" stroke-width="1.0" fill="none" />
<path d="M266.50 171.60 L266.50 178.00" stroke="#4a4a4a" stroke-width="0.9" fill="none" />
<path d="M266.50 178.00 L266.50 194.50 L238.50 194.50 L238.50 188.60" stroke="#ff3030" stroke-width="0.9" fill="none" />
<path d="M210.80 166.50 L225.70 166.50" stroke="#4a4a4a" stroke-width="0.9" fill="none" />
<path d="M225.70 166.50 L239.00 166.50" stroke="#ff4a4a" stroke-width="1.0" fill="none" />
<path d="M238.50 166.80 L238.50 171.60" stroke="#4a4a4a" stroke-width="0.9" fill="none" />
<path d="M234.20 171.50 L242.80 171.50" stroke="#444" stroke-width="1.0" fill="none" />
<path d="M230.50 175.50 L246.50 175.50" stroke="#888" stroke-width="1.0" fill="none" />
<path d="M233.60 179.50 L243.40 179.50" stroke="#444" stroke-width="1.0" fill="none" />
<path d="M230.50 183.50 L246.50 183.50" stroke="#888" stroke-width="1.0" fill="none" />
<path d="M238.50 183.30 L238.50 188.60" stroke="#4a4a4a" stroke-width="0.9" fill="none" />
<circle cx="254.90" cy="194.60" r="1.35" fill="#ff0000"/>
<path d="M255.00 194.80 L255.00 206.20" stroke="#707070" stroke-width="1.0" fill="none" />
<path d="M249.40 206.50 L260.50 206.50" stroke="#555" stroke-width="1.0" fill="none" />
<path d="M251.20 208.50 L258.80 208.50" stroke="#888" stroke-width="1.0" fill="none" />
<path d="M253.20 210.50 L256.80 210.50" stroke="#999" stroke-width="1.0" fill="none" />
<path d="M197.50 177.50 L197.50 194.80" stroke="#4a4a4a" stroke-width="0.9" fill="none" />
<circle cx="197.7" cy="206.4" r="11.6" fill="none" stroke="#4a4a4a" stroke-width="0.9"/>
<path d="M197.50 218.00 L197.50 222.90" stroke="#4a4a4a" stroke-width="0.9" fill="none" />
<path d="M197.60 222.50 L214.50 222.50 L214.50 189.50 L209.50 189.50" stroke="#ff3030" stroke-width="0.9" fill="none" />
<path d="M209.50 189.10 L209.50 177.50" stroke="#4a4a4a" stroke-width="0.9" fill="none" />
<path d="M193.70 208.00 L193.70 204.40 L197.60 204.40 L197.60 208.00 L201.20 208.00 L201.20 204.40" stroke="#4a4a4a" stroke-width="0.8" fill="none" />
<path d="M196.20 198.60 L199.00 198.60" stroke="#4a4a4a" stroke-width="0.6" fill="none" />
<path d="M197.60 197.20 L197.60 200.00" stroke="#4a4a4a" stroke-width="0.6" fill="none" />
<g transform="translate(0,0)">
<rect x="-1.6" y="252.2" width="389" height="300" fill="#f0f0f0" stroke="#9a9a9a" stroke-width="0.8"/>
<rect x="-1.2" y="252.6" width="388.2" height="21.6" fill="#ffffff"/>
<text x="4.00" y="266.60" font-family="Liberation Sans, Arial, sans-serif" font-size="9.0" font-weight="normal" fill="#1c1c2a" text-anchor="start"  textLength="69.1" lengthAdjust="spacingAndGlyphs">Oscilloscope-XSC1</text>
<path d="M371.60 259.60 L378.40 266.40" stroke="#444" stroke-width="0.8" fill="none" />
<path d="M378.40 259.60 L371.60 266.40" stroke="#444" stroke-width="0.8" fill="none" />
<rect x="0" y="274.2" width="385.8" height="171.5" fill="#000"/>
<rect x="0" y="273.4" width="385.8" height="1" fill="#8a8a8a"/>
<path d="M4.0 279.5 H382.5 V442.5 H4.0" stroke="#b4b4b4" stroke-width="1" fill="none"/>
<rect x="384.4" y="274.2" width="1.0" height="171.5" fill="#9a9a9a"/>
<path d="M41.50 279.5 V442.0" stroke="#8c8c8c" stroke-width="1" stroke-dasharray="1.42 1.41" fill="none"/>
<path d="M79.50 279.5 V442.0" stroke="#8c8c8c" stroke-width="1" stroke-dasharray="1.42 1.41" fill="none"/>
<path d="M117.50 279.5 V442.0" stroke="#8c8c8c" stroke-width="1" stroke-dasharray="1.42 1.41" fill="none"/>
<path d="M155.50 279.5 V442.0" stroke="#8c8c8c" stroke-width="1" stroke-dasharray="1.42 1.41" fill="none"/>
<path d="M193.50 279.5 V442.0" stroke="#8c8c8c" stroke-width="1" stroke-dasharray="1.42 1.41" fill="none"/>
<path d="M230.50 279.5 V442.0" stroke="#8c8c8c" stroke-width="1" stroke-dasharray="1.42 1.41" fill="none"/>
<path d="M268.50 279.5 V442.0" stroke="#8c8c8c" stroke-width="1" stroke-dasharray="1.42 1.41" fill="none"/>
<path d="M306.50 279.5 V442.0" stroke="#8c8c8c" stroke-width="1" stroke-dasharray="1.42 1.41" fill="none"/>
<path d="M344.50 279.5 V442.0" stroke="#8c8c8c" stroke-width="1" stroke-dasharray="1.42 1.41" fill="none"/>
<path d="M5.0 306.50 H382.0" stroke="#8c8c8c" stroke-width="1" stroke-dasharray="1.42 1.41" fill="none"/>
<path d="M5.0 333.50 H382.0" stroke="#8c8c8c" stroke-width="1" stroke-dasharray="1.42 1.41" fill="none"/>
<path d="M5.0 387.50 H382.0" stroke="#8c8c8c" stroke-width="1" stroke-dasharray="1.42 1.41" fill="none"/>
<path d="M5.0 414.50 H382.0" stroke="#8c8c8c" stroke-width="1" stroke-dasharray="1.42 1.41" fill="none"/>
<path d="M4.0 360.50 H382.0" stroke="#c4c4c4" stroke-width="0.85" fill="none"/>
<path d="M4.00 359.10 V361.90M11.56 359.10 V361.90M19.12 359.10 V361.90M26.68 359.10 V361.90M34.24 359.10 V361.90M41.80 359.10 V361.90M49.36 359.10 V361.90M56.92 359.10 V361.90M64.48 359.10 V361.90M72.04 359.10 V361.90M79.60 359.10 V361.90M87.16 359.10 V361.90M94.72 359.10 V361.90M102.28 359.10 V361.90M109.84 359.10 V361.90M117.40 359.10 V361.90M124.96 359.10 V361.90M132.52 359.10 V361.90M140.08 359.10 V361.90M147.64 359.10 V361.90M155.20 359.10 V361.90M162.76 359.10 V361.90M170.32 359.10 V361.90M177.88 359.10 V361.90M185.44 359.10 V361.90M193.00 359.10 V361.90M200.56 359.10 V361.90M208.12 359.10 V361.90M215.68 359.10 V361.90M223.24 359.10 V361.90M230.80 359.10 V361.90M238.36 359.10 V361.90M245.92 359.10 V361.90M253.48 359.10 V361.90M261.04 359.10 V361.90M268.60 359.10 V361.90M276.16 359.10 V361.90M283.72 359.10 V361.90M291.28 359.10 V361.90M298.84 359.10 V361.90M306.40 359.10 V361.90M313.96 359.10 V361.90M321.52 359.10 V361.90M329.08 359.10 V361.90M336.64 359.10 V361.90M344.20 359.10 V361.90M351.76 359.10 V361.90M359.32 359.10 V361.90M366.88 359.10 V361.90M374.44 359.10 V361.90M382.00 359.10 V361.90" stroke="#b0b0b0" stroke-width="0.6" fill="none"/>
<rect x="3.1" y="277.5" width="1.8" height="165" fill="#066006"/>
<path d="M0.3999999999999999 275.2 H7.6 L4.0 279.2 Z" fill="#d020d0"/>
<path d="M0.3999999999999999 275.3 H7.6" stroke="#20c8d8" stroke-width="0.8"/>
<path d="M4.00 345.20 L4.50 345.16 L5.00 345.04 L5.50 344.84 L6.00 344.57 L6.50 344.21 L7.00 343.79 L7.50 343.29 L8.00 342.73 L8.50 342.11 L9.00 341.42 L9.50 340.69 L10.00 339.90 L10.50 339.07 L11.00 338.20 L11.50 337.30 L12.00 336.38 L12.49 335.43 L12.99 334.48 L13.49 333.52 L13.99 332.55 L14.49 331.60 L14.99 330.66 L15.49 329.74 L15.99 328.84 L16.49 327.98 L16.99 327.16 L17.49 326.38 L17.99 325.65 L18.49 324.98 L18.99 324.36 L19.49 323.81 L19.99 323.33 L20.49 322.92 L20.99 322.58 L21.49 322.32 L21.99 322.13 L22.49 322.03 L22.99 322.00 L23.49 322.06 L23.99 322.19 L24.49 322.40 L24.99 322.69 L25.49 323.06 L25.99 323.49 L26.49 324.00 L26.99 324.57 L27.49 325.21 L27.99 325.90 L28.48 326.65 L28.98 327.44 L29.48 328.28 L29.98 329.15 L30.48 330.06 L30.98 330.99 L31.48 331.93 L31.98 332.89 L32.48 333.85 L32.98 334.82 L33.48 335.77 L33.98 336.71 L34.48 337.62 L34.98 338.51 L35.48 339.37 L35.98 340.18 L36.48 340.95 L36.98 341.67 L37.48 342.33 L37.98 342.94 L38.48 343.48 L38.98 343.95 L39.48 344.35 L39.98 344.67 L40.48 344.92 L40.98 345.09 L41.48 345.18 L41.98 345.20 L42.48 345.13 L42.98 344.98 L43.48 344.75 L43.98 344.45 L44.47 344.07 L44.97 343.62 L45.47 343.10 L45.97 342.52 L46.47 341.87 L46.97 341.17 L47.47 340.41 L47.97 339.61 L48.47 338.77 L48.97 337.89 L49.47 336.98 L49.97 336.05 L50.47 335.10 L50.97 334.14 L51.47 333.18 L51.97 332.22 L52.47 331.26 L52.97 330.33 L53.47 329.42 L53.97 328.53 L54.47 327.69 L54.97 326.88 L55.47 326.12 L55.97 325.41 L56.47 324.75 L56.97 324.16 L57.47 323.64 L57.97 323.18 L58.47 322.79 L58.97 322.48 L59.47 322.24 L59.96 322.09 L60.46 322.01 L60.96 322.01 L61.46 322.09 L61.96 322.25 L62.46 322.49 L62.96 322.81 L63.46 323.20 L63.96 323.66 L64.46 324.20 L64.96 324.79 L65.46 325.45 L65.96 326.16 L66.46 326.92 L66.96 327.73 L67.46 328.58 L67.96 329.47 L68.46 330.38 L68.96 331.32 L69.46 332.27 L69.96 333.23 L70.46 334.19 L70.96 335.15 L71.46 336.10 L71.96 337.03 L72.46 337.94 L72.96 338.82 L73.46 339.66 L73.96 340.46 L74.46 341.21 L74.96 341.91 L75.46 342.55 L75.96 343.14 L76.45 343.65 L76.95 344.10 L77.45 344.47 L77.95 344.77 L78.45 344.99 L78.95 345.13 L79.45 345.20 L79.95 345.18 L80.45 345.08 L80.95 344.91 L81.45 344.65 L81.95 344.33 L82.45 343.92 L82.95 343.45 L83.45 342.90 L83.95 342.30 L84.45 341.63 L84.95 340.91 L85.45 340.14 L85.95 339.32 L86.45 338.46 L86.95 337.57 L87.45 336.65 L87.95 335.71 L88.45 334.76 L88.95 333.80 L89.45 332.84 L89.95 331.88 L90.45 330.93 L90.95 330.01 L91.45 329.10 L91.95 328.23 L92.44 327.40 L92.94 326.60 L93.44 325.86 L93.94 325.17 L94.44 324.54 L94.94 323.97 L95.44 323.47 L95.94 323.03 L96.44 322.67 L96.94 322.39 L97.44 322.18 L97.94 322.05 L98.44 322.00 L98.94 322.03 L99.44 322.14 L99.94 322.33 L100.44 322.60 L100.94 322.94 L101.44 323.36 L101.94 323.84 L102.44 324.40 L102.94 325.02 L103.44 325.69 L103.94 326.42 L104.44 327.21 L104.94 328.03 L105.44 328.89 L105.94 329.79 L106.44 330.71 L106.94 331.65 L107.44 332.61 L107.94 333.57 L108.43 334.53 L108.93 335.49 L109.43 336.43 L109.93 337.36 L110.43 338.25 L110.93 339.12 L111.43 339.95 L111.93 340.73 L112.43 341.46 L112.93 342.15 L113.43 342.77 L113.93 343.32 L114.43 343.82 L114.93 344.24 L115.43 344.58 L115.93 344.86 L116.43 345.05 L116.93 345.16 L117.43 345.20 L117.93 345.16 L118.43 345.03 L118.93 344.83 L119.43 344.55 L119.93 344.19 L120.43 343.76 L120.93 343.26 L121.43 342.70 L121.93 342.07 L122.43 341.38 L122.93 340.64 L123.43 339.85 L123.92 339.02 L124.42 338.15 L124.92 337.25 L125.42 336.32 L125.92 335.38 L126.42 334.42 L126.92 333.46 L127.42 332.50 L127.92 331.54 L128.42 330.60 L128.92 329.68 L129.42 328.79 L129.92 327.93 L130.42 327.11 L130.92 326.34 L131.42 325.61 L131.92 324.94 L132.42 324.33 L132.92 323.78 L133.42 323.30 L133.92 322.90 L134.42 322.56 L134.92 322.30 L135.42 322.12 L135.92 322.02 L136.42 322.00 L136.92 322.06 L137.42 322.20 L137.92 322.42 L138.42 322.71 L138.92 323.08 L139.42 323.52 L139.92 324.03 L140.41 324.61 L140.91 325.25 L141.41 325.94 L141.91 326.69 L142.41 327.49 L142.91 328.33 L143.41 329.21 L143.91 330.11 L144.41 331.04 L144.91 331.99 L145.41 332.95 L145.91 333.91 L146.41 334.87 L146.91 335.82 L147.41 336.76 L147.91 337.68 L148.41 338.56 L148.91 339.42 L149.41 340.23 L149.91 341.00 L150.41 341.71 L150.91 342.37 L151.41 342.97 L151.91 343.51 L152.41 343.97 L152.91 344.37 L153.41 344.69 L153.91 344.93 L154.41 345.10 L154.91 345.19 L155.41 345.19 L155.91 345.12 L156.40 344.97 L156.90 344.74 L157.40 344.43 L157.90 344.05 L158.40 343.59 L158.90 343.07 L159.40 342.48 L159.90 341.83 L160.40 341.13 L160.90 340.37 L161.40 339.56 L161.90 338.72 L162.40 337.84 L162.90 336.93 L163.40 335.99 L163.90 335.04 L164.40 334.08 L164.90 333.12 L165.40 332.16 L165.90 331.21 L166.40 330.28 L166.90 329.37 L167.40 328.48 L167.90 327.64 L168.40 326.83 L168.90 326.07 L169.40 325.37 L169.90 324.72 L170.40 324.13 L170.90 323.61 L171.40 323.15 L171.90 322.77 L172.39 322.46 L172.89 322.23 L173.39 322.08 L173.89 322.01 L174.39 322.01 L174.89 322.10 L175.39 322.27 L175.89 322.51 L176.39 322.83 L176.89 323.23 L177.39 323.69 L177.89 324.23 L178.39 324.83 L178.89 325.49 L179.39 326.20 L179.89 326.97 L180.39 327.78 L180.89 328.64 L181.39 329.52 L181.89 330.44 L182.39 331.37 L182.89 332.33 L183.39 333.29 L183.89 334.25 L184.39 335.21 L184.89 336.16 L185.39 337.09 L185.89 337.99 L186.39 338.87 L186.89 339.71 L187.39 340.50 L187.89 341.25 L188.38 341.95 L188.88 342.59 L189.38 343.17 L189.88 343.68 L190.38 344.12 L190.88 344.49 L191.38 344.78 L191.88 345.00 L192.38 345.14 L192.88 345.20 L193.38 345.18 L193.88 345.08 L194.38 344.90 L194.88 344.64 L195.38 344.30 L195.88 343.90 L196.38 343.42 L196.88 342.87 L197.38 342.26 L197.88 341.59 L198.38 340.86 L198.88 340.09 L199.38 339.27 L199.88 338.41 L200.38 337.52 L200.88 336.60 L201.38 335.66 L201.88 334.70 L202.38 333.74 L202.88 332.78 L203.38 331.82 L203.88 330.88 L204.37 329.95 L204.87 329.05 L205.37 328.18 L205.87 327.35 L206.37 326.56 L206.87 325.82 L207.37 325.13 L207.87 324.50 L208.37 323.94 L208.87 323.44 L209.37 323.01 L209.87 322.65 L210.37 322.37 L210.87 322.17 L211.37 322.04 L211.87 322.00 L212.37 322.04 L212.87 322.15 L213.37 322.34 L213.87 322.62 L214.37 322.96 L214.87 323.38 L215.37 323.87 L215.87 324.43 L216.37 325.05 L216.87 325.73 L217.37 326.47 L217.87 327.25 L218.37 328.08 L218.87 328.94 L219.37 329.84 L219.87 330.77 L220.36 331.71 L220.86 332.66 L221.36 333.63 L221.86 334.59 L222.36 335.54 L222.86 336.49 L223.36 337.41 L223.86 338.30 L224.36 339.17 L224.86 339.99 L225.36 340.77 L225.86 341.51 L226.36 342.18 L226.86 342.80 L227.36 343.36 L227.86 343.84 L228.36 344.26 L228.86 344.60 L229.36 344.87 L229.86 345.06 L230.36 345.17 L230.86 345.20 L231.36 345.15 L231.86 345.02 L232.36 344.81 L232.86 344.53 L233.36 344.17 L233.86 343.74 L234.36 343.23 L234.86 342.66 L235.36 342.03 L235.86 341.34 L236.35 340.60 L236.85 339.81 L237.35 338.97 L237.85 338.10 L238.35 337.20 L238.85 336.27 L239.35 335.32 L239.85 334.37 L240.35 333.40 L240.85 332.44 L241.35 331.49 L241.85 330.55 L242.35 329.63 L242.85 328.74 L243.35 327.88 L243.85 327.07 L244.35 326.29 L244.85 325.57 L245.35 324.90 L245.85 324.30 L246.35 323.75 L246.85 323.28 L247.35 322.88 L247.85 322.55 L248.35 322.29 L248.85 322.12 L249.35 322.02 L249.85 322.00 L250.35 322.07 L250.85 322.21 L251.35 322.43 L251.85 322.73 L252.34 323.10 L252.84 323.55 L253.34 324.06 L253.84 324.64 L254.34 325.29 L254.84 325.99 L255.34 326.74 L255.84 327.54 L256.34 328.38 L256.84 329.26 L257.34 330.17 L257.84 331.10 L258.34 332.04 L258.84 333.00 L259.34 333.97 L259.84 334.93 L260.34 335.88 L260.84 336.81 L261.34 337.73 L261.84 338.61 L262.34 339.46 L262.84 340.27 L263.34 341.04 L263.84 341.75 L264.34 342.41 L264.84 343.00 L265.34 343.53 L265.84 344.00 L266.34 344.39 L266.84 344.70 L267.34 344.94 L267.83 345.11 L268.33 345.19 L268.83 345.19 L269.33 345.11 L269.83 344.96 L270.33 344.72 L270.83 344.41 L271.33 344.02 L271.83 343.57 L272.33 343.04 L272.83 342.45 L273.33 341.79 L273.83 341.08 L274.33 340.32 L274.83 339.52 L275.33 338.67 L275.83 337.78 L276.33 336.87 L276.83 335.94 L277.33 334.99 L277.83 334.03 L278.33 333.06 L278.83 332.10 L279.33 331.15 L279.83 330.22 L280.33 329.31 L280.83 328.43 L281.33 327.59 L281.83 326.79 L282.33 326.03 L282.83 325.33 L283.33 324.68 L283.82 324.10 L284.32 323.58 L284.82 323.13 L285.32 322.75 L285.82 322.45 L286.32 322.22 L286.82 322.07 L287.32 322.01 L287.82 322.02 L288.32 322.11 L288.82 322.28 L289.32 322.53 L289.82 322.85 L290.32 323.25 L290.82 323.72 L291.32 324.26 L291.82 324.86 L292.32 325.53 L292.82 326.25 L293.32 327.02 L293.82 327.83 L294.32 328.69 L294.82 329.57 L295.32 330.49 L295.82 331.43 L296.32 332.38 L296.82 333.34 L297.32 334.31 L297.82 335.26 L298.32 336.21 L298.82 337.14 L299.32 338.04 L299.81 338.92 L300.31 339.75 L300.81 340.55 L301.31 341.30 L301.81 341.99 L302.31 342.63 L302.81 343.20 L303.31 343.71 L303.81 344.14 L304.31 344.51 L304.81 344.80 L305.31 345.01 L305.81 345.14 L306.31 345.20 L306.81 345.17 L307.31 345.07 L307.81 344.88 L308.31 344.62 L308.81 344.28 L309.31 343.87 L309.81 343.39 L310.31 342.84 L310.81 342.22 L311.31 341.55 L311.81 340.82 L312.31 340.04 L312.81 339.22 L313.31 338.36 L313.81 337.47 L314.31 336.54 L314.81 335.60 L315.31 334.65 L315.81 333.69 L316.30 332.72 L316.80 331.77 L317.30 330.82 L317.80 329.90 L318.30 329.00 L318.80 328.13 L319.30 327.30 L319.80 326.52 L320.30 325.78 L320.80 325.09 L321.30 324.47 L321.80 323.91 L322.30 323.41 L322.80 322.99 L323.30 322.63 L323.80 322.36" stroke="#b40000" stroke-width="0.9" fill="none" />
<path d="M4.00 375.60 L4.50 375.64 L5.00 375.76 L5.50 375.96 L6.00 376.23 L6.50 376.59 L7.00 377.01 L7.50 377.51 L8.00 378.07 L8.50 378.69 L9.00 379.38 L9.50 380.11 L10.00 380.90 L10.50 381.73 L11.00 382.60 L11.50 383.50 L12.00 384.42 L12.49 385.37 L12.99 386.32 L13.49 387.28 L13.99 388.25 L14.49 389.20 L14.99 390.14 L15.49 391.06 L15.99 391.96 L16.49 392.82 L16.99 393.64 L17.49 394.42 L17.99 395.15 L18.49 395.82 L18.99 396.44 L19.49 396.99 L19.99 397.47 L20.49 397.88 L20.99 398.22 L21.49 398.48 L21.99 398.67 L22.49 398.77 L22.99 398.80 L23.49 398.74 L23.99 398.61 L24.49 398.40 L24.99 398.11 L25.49 397.74 L25.99 397.31 L26.49 396.80 L26.99 396.23 L27.49 395.59 L27.99 394.90 L28.48 394.15 L28.98 393.36 L29.48 392.52 L29.98 391.65 L30.48 390.74 L30.98 389.81 L31.48 388.87 L31.98 387.91 L32.48 386.95 L32.98 385.98 L33.48 385.03 L33.98 384.09 L34.48 383.18 L34.98 382.29 L35.48 381.43 L35.98 380.62 L36.48 379.85 L36.98 379.13 L37.48 378.47 L37.98 377.86 L38.48 377.32 L38.98 376.85 L39.48 376.45 L39.98 376.13 L40.48 375.88 L40.98 375.71 L41.48 375.62 L41.98 375.60 L42.48 375.67 L42.98 375.82 L43.48 376.05 L43.98 376.35 L44.47 376.73 L44.97 377.18 L45.47 377.70 L45.97 378.28 L46.47 378.93 L46.97 379.63 L47.47 380.39 L47.97 381.19 L48.47 382.03 L48.97 382.91 L49.47 383.82 L49.97 384.75 L50.47 385.70 L50.97 386.66 L51.47 387.62 L51.97 388.58 L52.47 389.54 L52.97 390.47 L53.47 391.38 L53.97 392.27 L54.47 393.11 L54.97 393.92 L55.47 394.68 L55.97 395.39 L56.47 396.05 L56.97 396.64 L57.47 397.16 L57.97 397.62 L58.47 398.01 L58.97 398.32 L59.47 398.56 L59.96 398.71 L60.46 398.79 L60.96 398.79 L61.46 398.71 L61.96 398.55 L62.46 398.31 L62.96 397.99 L63.46 397.60 L63.96 397.14 L64.46 396.60 L64.96 396.01 L65.46 395.35 L65.96 394.64 L66.46 393.88 L66.96 393.07 L67.46 392.22 L67.96 391.33 L68.46 390.42 L68.96 389.48 L69.46 388.53 L69.96 387.57 L70.46 386.61 L70.96 385.65 L71.46 384.70 L71.96 383.77 L72.46 382.86 L72.96 381.98 L73.46 381.14 L73.96 380.34 L74.46 379.59 L74.96 378.89 L75.46 378.25 L75.96 377.66 L76.45 377.15 L76.95 376.70 L77.45 376.33 L77.95 376.03 L78.45 375.81 L78.95 375.67 L79.45 375.60 L79.95 375.62 L80.45 375.72 L80.95 375.89 L81.45 376.15 L81.95 376.47 L82.45 376.88 L82.95 377.35 L83.45 377.90 L83.95 378.50 L84.45 379.17 L84.95 379.89 L85.45 380.66 L85.95 381.48 L86.45 382.34 L86.95 383.23 L87.45 384.15 L87.95 385.09 L88.45 386.04 L88.95 387.00 L89.45 387.96 L89.95 388.92 L90.45 389.87 L90.95 390.79 L91.45 391.70 L91.95 392.57 L92.44 393.40 L92.94 394.20 L93.44 394.94 L93.94 395.63 L94.44 396.26 L94.94 396.83 L95.44 397.33 L95.94 397.77 L96.44 398.13 L96.94 398.41 L97.44 398.62 L97.94 398.75 L98.44 398.80 L98.94 398.77 L99.44 398.66 L99.94 398.47 L100.44 398.20 L100.94 397.86 L101.44 397.44 L101.94 396.96 L102.44 396.40 L102.94 395.78 L103.44 395.11 L103.94 394.38 L104.44 393.59 L104.94 392.77 L105.44 391.91 L105.94 391.01 L106.44 390.09 L106.94 389.15 L107.44 388.19 L107.94 387.23 L108.43 386.27 L108.93 385.31 L109.43 384.37 L109.93 383.44 L110.43 382.55 L110.93 381.68 L111.43 380.85 L111.93 380.07 L112.43 379.34 L112.93 378.65 L113.43 378.03 L113.93 377.48 L114.43 376.98 L114.93 376.56 L115.43 376.22 L115.93 375.94 L116.43 375.75 L116.93 375.64 L117.43 375.60 L117.93 375.64 L118.43 375.77 L118.93 375.97 L119.43 376.25 L119.93 376.61 L120.43 377.04 L120.93 377.54 L121.43 378.10 L121.93 378.73 L122.43 379.42 L122.93 380.16 L123.43 380.95 L123.92 381.78 L124.42 382.65 L124.92 383.55 L125.42 384.48 L125.92 385.42 L126.42 386.38 L126.92 387.34 L127.42 388.30 L127.92 389.26 L128.42 390.20 L128.92 391.12 L129.42 392.01 L129.92 392.87 L130.42 393.69 L130.92 394.46 L131.42 395.19 L131.92 395.86 L132.42 396.47 L132.92 397.02 L133.42 397.50 L133.92 397.90 L134.42 398.24 L134.92 398.50 L135.42 398.68 L135.92 398.78 L136.42 398.80 L136.92 398.74 L137.42 398.60 L137.92 398.38 L138.42 398.09 L138.92 397.72 L139.42 397.28 L139.92 396.77 L140.41 396.19 L140.91 395.55 L141.41 394.86 L141.91 394.11 L142.41 393.31 L142.91 392.47 L143.41 391.59 L143.91 390.69 L144.41 389.76 L144.91 388.81 L145.41 387.85 L145.91 386.89 L146.41 385.93 L146.91 384.98 L147.41 384.04 L147.91 383.12 L148.41 382.24 L148.91 381.38 L149.41 380.57 L149.91 379.80 L150.41 379.09 L150.91 378.43 L151.41 377.83 L151.91 377.29 L152.41 376.83 L152.91 376.43 L153.41 376.11 L153.91 375.87 L154.41 375.70 L154.91 375.61 L155.41 375.61 L155.91 375.68 L156.40 375.83 L156.90 376.06 L157.40 376.37 L157.90 376.75 L158.40 377.21 L158.90 377.73 L159.40 378.32 L159.90 378.97 L160.40 379.67 L160.90 380.43 L161.40 381.24 L161.90 382.08 L162.40 382.96 L162.90 383.87 L163.40 384.81 L163.90 385.76 L164.40 386.72 L164.90 387.68 L165.40 388.64 L165.90 389.59 L166.40 390.52 L166.90 391.43 L167.40 392.32 L167.90 393.16 L168.40 393.97 L168.90 394.73 L169.40 395.43 L169.90 396.08 L170.40 396.67 L170.90 397.19 L171.40 397.65 L171.90 398.03 L172.39 398.34 L172.89 398.57 L173.39 398.72 L173.89 398.79 L174.39 398.79 L174.89 398.70 L175.39 398.53 L175.89 398.29 L176.39 397.97 L176.89 397.57 L177.39 397.11 L177.89 396.57 L178.39 395.97 L178.89 395.31 L179.39 394.60 L179.89 393.83 L180.39 393.02 L180.89 392.16 L181.39 391.28 L181.89 390.36 L182.39 389.43 L182.89 388.47 L183.39 387.51 L183.89 386.55 L184.39 385.59 L184.89 384.64 L185.39 383.71 L185.89 382.81 L186.39 381.93 L186.89 381.09 L187.39 380.30 L187.89 379.55 L188.38 378.85 L188.88 378.21 L189.38 377.63 L189.88 377.12 L190.38 376.68 L190.88 376.31 L191.38 376.02 L191.88 375.80 L192.38 375.66 L192.88 375.60 L193.38 375.62 L193.88 375.72 L194.38 375.90 L194.88 376.16 L195.38 376.50 L195.88 376.90 L196.38 377.38 L196.88 377.93 L197.38 378.54 L197.88 379.21 L198.38 379.94 L198.88 380.71 L199.38 381.53 L199.88 382.39 L200.38 383.28 L200.88 384.20 L201.38 385.14 L201.88 386.10 L202.38 387.06 L202.88 388.02 L203.38 388.98 L203.88 389.92 L204.37 390.85 L204.87 391.75 L205.37 392.62 L205.87 393.45 L206.37 394.24 L206.87 394.98 L207.37 395.67 L207.87 396.30 L208.37 396.86 L208.87 397.36 L209.37 397.79 L209.87 398.15 L210.37 398.43 L210.87 398.63 L211.37 398.76 L211.87 398.80 L212.37 398.76 L212.87 398.65 L213.37 398.46 L213.87 398.18 L214.37 397.84 L214.87 397.42 L215.37 396.93 L215.87 396.37 L216.37 395.75 L216.87 395.07 L217.37 394.33 L217.87 393.55 L218.37 392.72 L218.87 391.86 L219.37 390.96 L219.87 390.03 L220.36 389.09 L220.86 388.14 L221.36 387.17 L221.86 386.21 L222.36 385.26 L222.86 384.31 L223.36 383.39 L223.86 382.50 L224.36 381.63 L224.86 380.81 L225.36 380.03 L225.86 379.29 L226.36 378.62 L226.86 378.00 L227.36 377.44 L227.86 376.96 L228.36 376.54 L228.86 376.20 L229.36 375.93 L229.86 375.74 L230.36 375.63 L230.86 375.60 L231.36 375.65 L231.86 375.78 L232.36 375.99 L232.86 376.27 L233.36 376.63 L233.86 377.06 L234.36 377.57 L234.86 378.14 L235.36 378.77 L235.86 379.46 L236.35 380.20 L236.85 380.99 L237.35 381.83 L237.85 382.70 L238.35 383.60 L238.85 384.53 L239.35 385.48 L239.85 386.43 L240.35 387.40 L240.85 388.36 L241.35 389.31 L241.85 390.25 L242.35 391.17 L242.85 392.06 L243.35 392.92 L243.85 393.73 L244.35 394.51 L244.85 395.23 L245.35 395.90 L245.85 396.50 L246.35 397.05 L246.85 397.52 L247.35 397.92 L247.85 398.25 L248.35 398.51 L248.85 398.68 L249.35 398.78 L249.85 398.80 L250.35 398.73 L250.85 398.59 L251.35 398.37 L251.85 398.07 L252.34 397.70 L252.84 397.25 L253.34 396.74 L253.84 396.16 L254.34 395.51 L254.84 394.81 L255.34 394.06 L255.84 393.26 L256.34 392.42 L256.84 391.54 L257.34 390.63 L257.84 389.70 L258.34 388.76 L258.84 387.80 L259.34 386.83 L259.84 385.87 L260.34 384.92 L260.84 383.99 L261.34 383.07 L261.84 382.19 L262.34 381.34 L262.84 380.53 L263.34 379.76 L263.84 379.05 L264.34 378.39 L264.84 377.80 L265.34 377.27 L265.84 376.80 L266.34 376.41 L266.84 376.10 L267.34 375.86 L267.83 375.69 L268.33 375.61 L268.83 375.61 L269.33 375.69 L269.83 375.84 L270.33 376.08 L270.83 376.39 L271.33 376.78 L271.83 377.23 L272.33 377.76 L272.83 378.35 L273.33 379.01 L273.83 379.72 L274.33 380.48 L274.83 381.28 L275.33 382.13 L275.83 383.02 L276.33 383.93 L276.83 384.86 L277.33 385.81 L277.83 386.77 L278.33 387.74 L278.83 388.70 L279.33 389.65 L279.83 390.58 L280.33 391.49 L280.83 392.37 L281.33 393.21 L281.83 394.01 L282.33 394.77 L282.83 395.47 L283.33 396.12 L283.82 396.70 L284.32 397.22 L284.82 397.67 L285.32 398.05 L285.82 398.35 L286.32 398.58 L286.82 398.73 L287.32 398.79 L287.82 398.78 L288.32 398.69 L288.82 398.52 L289.32 398.27 L289.82 397.95 L290.32 397.55 L290.82 397.08 L291.32 396.54 L291.82 395.94 L292.32 395.27 L292.82 394.55 L293.32 393.78 L293.82 392.97 L294.32 392.11 L294.82 391.23 L295.32 390.31 L295.82 389.37 L296.32 388.42 L296.82 387.46 L297.32 386.49 L297.82 385.54 L298.32 384.59 L298.82 383.66 L299.32 382.76 L299.81 381.88 L300.31 381.05 L300.81 380.25 L301.31 379.50 L301.81 378.81 L302.31 378.17 L302.81 377.60 L303.31 377.09 L303.81 376.66 L304.31 376.29 L304.81 376.00 L305.31 375.79 L305.81 375.66 L306.31 375.60 L306.81 375.63 L307.31 375.73 L307.81 375.92 L308.31 376.18 L308.81 376.52 L309.31 376.93 L309.81 377.41 L310.31 377.96 L310.81 378.58 L311.31 379.25 L311.81 379.98 L312.31 380.76 L312.81 381.58 L313.31 382.44 L313.81 383.33 L314.31 384.26 L314.81 385.20 L315.31 386.15 L315.81 387.11 L316.30 388.08 L316.80 389.03 L317.30 389.98 L317.80 390.90 L318.30 391.80 L318.80 392.67 L319.30 393.50 L319.80 394.28 L320.30 395.02 L320.80 395.71 L321.30 396.33 L321.80 396.89 L322.30 397.39 L322.80 397.81 L323.30 398.17 L323.80 398.44" stroke="#b40000" stroke-width="0.9" fill="none" />
<path d="M23.80 322.13 L23.80 343.63" stroke="#c40000" stroke-width="1.9" fill="none" />
<path d="M23.80 398.67 L23.80 420.17" stroke="#c40000" stroke-width="1.9" fill="none" />
<path d="M63.50 322.99 L63.50 301.49" stroke="#c40000" stroke-width="1.0" fill="none" />
<path d="M63.50 397.81 L63.50 376.31" stroke="#c40000" stroke-width="1.0" fill="none" />
<path d="M102.50 324.59 L102.50 346.09" stroke="#c40000" stroke-width="1.0" fill="none" />
<path d="M102.50 396.21 L102.50 417.71" stroke="#c40000" stroke-width="1.0" fill="none" />
<path d="M142.50 326.83 L142.50 305.33" stroke="#c40000" stroke-width="1.0" fill="none" />
<path d="M142.50 393.97 L142.50 372.47" stroke="#c40000" stroke-width="1.0" fill="none" />
<path d="M181.50 329.54 L181.50 351.04" stroke="#c40000" stroke-width="1.0" fill="none" />
<path d="M181.50 391.26 L181.50 412.76" stroke="#c40000" stroke-width="1.0" fill="none" />
<path d="M220.50 332.54 L220.50 311.04" stroke="#c40000" stroke-width="1.0" fill="none" />
<path d="M220.50 388.26 L220.50 366.76" stroke="#c40000" stroke-width="1.0" fill="none" />
<path d="M260.50 335.61 L260.50 357.11" stroke="#c40000" stroke-width="1.0" fill="none" />
<path d="M260.50 385.19 L260.50 406.69" stroke="#c40000" stroke-width="1.0" fill="none" />
<path d="M299.50 338.55 L299.50 317.05" stroke="#c40000" stroke-width="1.0" fill="none" />
<path d="M299.50 382.25 L299.50 360.75" stroke="#c40000" stroke-width="1.0" fill="none" />
<circle cx="4.0" cy="345.0" r="1.0" fill="none" stroke="#c030c0" stroke-width="0.6"/>
<rect x="0" y="445.7" width="385.8" height="12" fill="#f0f0f0"/>
<rect x="348.6" y="447.8" width="25.6" height="7.6" fill="#cdcdcd"/>
<path d="M5.6 449.6 L3.4 451.5 L5.6 453.4" stroke="#555" stroke-width="0.7" fill="none"/>
<path d="M379.6 449.6 L381.8 451.5 L379.6 453.4" stroke="#555" stroke-width="0.7" fill="none"/>
<rect x="-3" y="458.8" width="43.8" height="39.6" fill="none" stroke="#d5d5d5" stroke-width="0.8"/>
<text x="3.10" y="470.80" font-family="Liberation Sans, Arial, sans-serif" font-size="8.3" font-weight="normal" fill="#1a1a1a" text-anchor="start"  stroke="#1a1a1a" stroke-width="0.22">T1</text>
<text x="3.10" y="481.50" font-family="Liberation Sans, Arial, sans-serif" font-size="8.3" font-weight="normal" fill="#1a1a1a" text-anchor="start"  stroke="#1a1a1a" stroke-width="0.22">T2</text>
<text x="3.10" y="494.60" font-family="Liberation Sans, Arial, sans-serif" font-size="8.3" font-weight="normal" fill="#1a1a1a" text-anchor="start"  stroke="#1a1a1a" stroke-width="0.22" textLength="20.1" lengthAdjust="spacingAndGlyphs">T2-T1</text>
<rect x="17.3" y="463.2" width="9.0" height="10.2" fill="#e1e1e1" stroke="#d0d0d0" stroke-width="0.5"/>
<rect x="28.8" y="463.2" width="9.0" height="10.2" fill="#e1e1e1" stroke="#d0d0d0" stroke-width="0.5"/>
<path d="M19.2 468.4 L22.2 465.79999999999995 V467.59999999999997 H24.8 V469.2 H22.2 V471.0 Z" fill="#000"/>
<path d="M36.4 468.4 L33.4 465.79999999999995 V467.59999999999997 H30.8 V469.2 H33.4 V471.0 Z" fill="#000"/>
<rect x="17.3" y="475.6" width="9.0" height="10.2" fill="#e1e1e1" stroke="#d0d0d0" stroke-width="0.5"/>
<rect x="28.8" y="475.6" width="9.0" height="10.2" fill="#e1e1e1" stroke="#d0d0d0" stroke-width="0.5"/>
<path d="M19.2 480.8 L22.2 478.2 V480.0 H24.8 V481.6 H22.2 V483.40000000000003 Z" fill="#000"/>
<path d="M36.4 480.8 L33.4 478.2 V480.0 H30.8 V481.6 H33.4 V483.40000000000003 Z" fill="#000"/>
<rect x="41.7" y="458.6" width="227" height="39.5" fill="#fff" stroke="#c8c8c8" stroke-width="0.6"/>
<path d="M41.7 498 V458.7 H268.7" stroke="#6a6a6a" stroke-width="0.9" fill="none"/>
<text x="61.30" y="466.60" font-family="Liberation Sans, Arial, sans-serif" font-size="8.3" font-weight="normal" fill="#1a1a1a" text-anchor="start"  stroke="#1a1a1a" stroke-width="0.22" textLength="16.8" lengthAdjust="spacingAndGlyphs">Time</text>
<text x="54.10" y="475.30" font-family="Liberation Sans, Arial, sans-serif" font-size="8.3" font-weight="normal" fill="#1a1a1a" text-anchor="start"  stroke="#1a1a1a" stroke-width="0.22" textLength="24.5" lengthAdjust="spacingAndGlyphs">2.885 s</text>
<text x="54.10" y="484.30" font-family="Liberation Sans, Arial, sans-serif" font-size="8.3" font-weight="normal" fill="#1a1a1a" text-anchor="start"  stroke="#1a1a1a" stroke-width="0.22" textLength="24.5" lengthAdjust="spacingAndGlyphs">2.885 s</text>
<text x="54.10" y="493.40" font-family="Liberation Sans, Arial, sans-serif" font-size="8.3" font-weight="normal" fill="#1a1a1a" text-anchor="start"  stroke="#1a1a1a" stroke-width="0.22" textLength="24.5" lengthAdjust="spacingAndGlyphs">0.000 s</text>
<text x="102.00" y="466.60" font-family="Liberation Sans, Arial, sans-serif" font-size="8.3" font-weight="normal" fill="#1a1a1a" text-anchor="start"  stroke="#1a1a1a" stroke-width="0.22" textLength="36" lengthAdjust="spacingAndGlyphs">Channel<tspan dy="-0.9">_</tspan><tspan dy="0.9">A</tspan></text>
<text x="104.60" y="475.30" font-family="Liberation Sans, Arial, sans-serif" font-size="8.3" font-weight="normal" fill="#1a1a1a" text-anchor="start"  stroke="#1a1a1a" stroke-width="0.22" textLength="30.2" lengthAdjust="spacingAndGlyphs">21.019 V</text>
<text x="104.60" y="484.30" font-family="Liberation Sans, Arial, sans-serif" font-size="8.3" font-weight="normal" fill="#1a1a1a" text-anchor="start"  stroke="#1a1a1a" stroke-width="0.22" textLength="30.2" lengthAdjust="spacingAndGlyphs">21.019 V</text>
<text x="107.00" y="493.40" font-family="Liberation Sans, Arial, sans-serif" font-size="8.3" font-weight="normal" fill="#1a1a1a" text-anchor="start"  stroke="#1a1a1a" stroke-width="0.22" textLength="25.7" lengthAdjust="spacingAndGlyphs">0.000 V</text>
<text x="155.00" y="466.60" font-family="Liberation Sans, Arial, sans-serif" font-size="8.3" font-weight="normal" fill="#1a1a1a" text-anchor="start"  stroke="#1a1a1a" stroke-width="0.22" textLength="35.4" lengthAdjust="spacingAndGlyphs">Channel<tspan dy="-0.9">_</tspan><tspan dy="0.9">B</tspan></text>
<text x="155.00" y="475.30" font-family="Liberation Sans, Arial, sans-serif" font-size="8.3" font-weight="normal" fill="#1a1a1a" text-anchor="start"  stroke="#1a1a1a" stroke-width="0.22" textLength="32.6" lengthAdjust="spacingAndGlyphs">-21.065 V</text>
<text x="155.00" y="484.30" font-family="Liberation Sans, Arial, sans-serif" font-size="8.3" font-weight="normal" fill="#1a1a1a" text-anchor="start"  stroke="#1a1a1a" stroke-width="0.22" textLength="32.6" lengthAdjust="spacingAndGlyphs">-21.065 V</text>
<text x="160.00" y="493.40" font-family="Liberation Sans, Arial, sans-serif" font-size="8.3" font-weight="normal" fill="#1a1a1a" text-anchor="start"  stroke="#1a1a1a" stroke-width="0.22" textLength="25.9" lengthAdjust="spacingAndGlyphs">0.000 V</text>
<rect x="275.3" y="463.3" width="43.5" height="14" fill="#e1e1e1" stroke="#adadad" stroke-width="0.6"/>
<text x="283.80" y="473.50" font-family="Liberation Sans, Arial, sans-serif" font-size="8.3" font-weight="normal" fill="#1a1a1a" text-anchor="start"  stroke="#1a1a1a" stroke-width="0.22" textLength="25.7" lengthAdjust="spacingAndGlyphs">Reverse</text>
<rect x="275.3" y="482.5" width="43.5" height="14" fill="#e1e1e1" stroke="#adadad" stroke-width="0.6"/>
<text x="289.00" y="492.40" font-family="Liberation Sans, Arial, sans-serif" font-size="8.3" font-weight="normal" fill="#1a1a1a" text-anchor="start"  stroke="#1a1a1a" stroke-width="0.22" textLength="15.3" lengthAdjust="spacingAndGlyphs">Save</text>
<text x="324.70" y="499.40" font-family="Liberation Sans, Arial, sans-serif" font-size="8.3" font-weight="normal" fill="#1a1a1a" text-anchor="start"  stroke="#1a1a1a" stroke-width="0.22" textLength="37.3" lengthAdjust="spacingAndGlyphs">Ext. trigger</text>
<circle cx="370" cy="497" r="4.0" fill="#fff" stroke="#c4c4c4" stroke-width="0.7"/>
<path d="M-3 545 V508.8 H90.0 V545" stroke="#dcdcdc" stroke-width="0.8" fill="none"/>
<rect x="2.5" y="505" width="32.3" height="8" fill="#f0f0f0"/>
<text x="3.50" y="511.60" font-family="Liberation Sans, Arial, sans-serif" font-size="8.3" font-weight="normal" fill="#1a1a1a" text-anchor="start"  stroke="#1a1a1a" stroke-width="0.22" textLength="30.3" lengthAdjust="spacingAndGlyphs">Timebase</text>
<path d="M91.2 545 V508.8 H181.8 V545" stroke="#dcdcdc" stroke-width="0.8" fill="none"/>
<rect x="94.0" y="505" width="35.8" height="8" fill="#f0f0f0"/>
<text x="95.00" y="511.60" font-family="Liberation Sans, Arial, sans-serif" font-size="8.3" font-weight="normal" fill="#1a1a1a" text-anchor="start"  stroke="#1a1a1a" stroke-width="0.22" textLength="33.8" lengthAdjust="spacingAndGlyphs">Channel A</text>
<path d="M183.0 545 V508.8 H274.0 V545" stroke="#dcdcdc" stroke-width="0.8" fill="none"/>
<rect x="185.2" y="505" width="35.8" height="8" fill="#f0f0f0"/>
<text x="186.20" y="511.60" font-family="Liberation Sans, Arial, sans-serif" font-size="8.3" font-weight="normal" fill="#1a1a1a" text-anchor="start"  stroke="#1a1a1a" stroke-width="0.22" textLength="33.8" lengthAdjust="spacingAndGlyphs">Channel B</text>
<path d="M275.2 545 V508.8 H384.0 V545" stroke="#dcdcdc" stroke-width="0.8" fill="none"/>
<rect x="278.0" y="505" width="26.3" height="8" fill="#f0f0f0"/>
<text x="279.00" y="511.60" font-family="Liberation Sans, Arial, sans-serif" font-size="8.3" font-weight="normal" fill="#1a1a1a" text-anchor="start"  stroke="#1a1a1a" stroke-width="0.22" textLength="24.3" lengthAdjust="spacingAndGlyphs">Trigger</text>
<text x="0.60" y="523.80" font-family="Liberation Sans, Arial, sans-serif" font-size="8.3" font-weight="normal" fill="#1a1a1a" text-anchor="start"  stroke="#1a1a1a" stroke-width="0.22" textLength="19.4" lengthAdjust="spacingAndGlyphs">Scale:</text>
<rect x="26.5" y="513.5" width="59.80" height="12.80" fill="#fff" stroke="#9a9a9a" stroke-width="0.7"/>
<text x="29.40" y="522.00" font-family="Liberation Sans, Arial, sans-serif" font-size="8.2" font-weight="normal" fill="#1a1a1a" text-anchor="start"  stroke="#1a1a1a" stroke-width="0.22">20 ms/Div</text>
<text x="0.60" y="536.90" font-family="Liberation Sans, Arial, sans-serif" font-size="8.3" font-weight="normal" fill="#1a1a1a" text-anchor="start"  stroke="#1a1a1a" stroke-width="0.22" textLength="39.4" lengthAdjust="spacingAndGlyphs">X pos.(Div):</text>
<rect x="43.4" y="528.5" width="42.90" height="16.50" fill="#fff" stroke="#9a9a9a" stroke-width="0.7"/>
<text x="46.20" y="537.00" font-family="Liberation Sans, Arial, sans-serif" font-size="8.2" font-weight="normal" fill="#1a1a1a" text-anchor="start"  stroke="#1a1a1a" stroke-width="0.22">0</text>
<text x="93.10" y="523.80" font-family="Liberation Sans, Arial, sans-serif" font-size="8.3" font-weight="normal" fill="#1a1a1a" text-anchor="start"  stroke="#1a1a1a" stroke-width="0.22" textLength="19.4" lengthAdjust="spacingAndGlyphs">Scale:</text>
<rect x="117.3" y="513.5" width="62.10" height="12.80" fill="#fff" stroke="#9a9a9a" stroke-width="0.7"/>
<text x="120.60" y="522.00" font-family="Liberation Sans, Arial, sans-serif" font-size="8.2" font-weight="normal" fill="#1a1a1a" text-anchor="start"  stroke="#1a1a1a" stroke-width="0.22">50  V/Div</text>
<text x="93.10" y="536.90" font-family="Liberation Sans, Arial, sans-serif" font-size="8.3" font-weight="normal" fill="#1a1a1a" text-anchor="start"  stroke="#1a1a1a" stroke-width="0.22" textLength="40" lengthAdjust="spacingAndGlyphs">Y pos.(Div):</text>
<rect x="136.3" y="528.5" width="43.10" height="16.50" fill="#fff" stroke="#9a9a9a" stroke-width="0.7"/>
<text x="140.00" y="537.00" font-family="Liberation Sans, Arial, sans-serif" font-size="8.2" font-weight="normal" fill="#1a1a1a" text-anchor="start"  stroke="#1a1a1a" stroke-width="0.22">-1</text>
<text x="184.00" y="523.80" font-family="Liberation Sans, Arial, sans-serif" font-size="8.3" font-weight="normal" fill="#1a1a1a" text-anchor="start"  stroke="#1a1a1a" stroke-width="0.22" textLength="19.4" lengthAdjust="spacingAndGlyphs">Scale:</text>
<rect x="209.4" y="513.5" width="62.50" height="12.80" fill="#fff" stroke="#9a9a9a" stroke-width="0.7"/>
<text x="213.00" y="522.00" font-family="Liberation Sans, Arial, sans-serif" font-size="8.2" font-weight="normal" fill="#1a1a1a" text-anchor="start"  stroke="#1a1a1a" stroke-width="0.22">50  V/Div</text>
<text x="184.00" y="536.90" font-family="Liberation Sans, Arial, sans-serif" font-size="8.3" font-weight="normal" fill="#1a1a1a" text-anchor="start"  stroke="#1a1a1a" stroke-width="0.22" textLength="40" lengthAdjust="spacingAndGlyphs">Y pos.(Div):</text>
<rect x="228.8" y="528.5" width="31.20" height="16.50" fill="#fff" stroke="#2b8de0" stroke-width="0.7"/>
<text x="233.20" y="537.00" font-family="Liberation Sans, Arial, sans-serif" font-size="8.2" font-weight="normal" fill="#1a1a1a" text-anchor="start"  stroke="#1a1a1a" stroke-width="0.22">1</text>
<path d="M232.6 531.2 V538.6" stroke="#000" stroke-width="0.5"/>
<rect x="261.0" y="528.4" width="10.4" height="6.0" fill="#f0f0f0" stroke="#d4d4d4" stroke-width="0.6"/>
<rect x="261.0" y="534.9" width="10.4" height="6.4" fill="#f0f0f0" stroke="#d4d4d4" stroke-width="0.6"/>
<path d="M263.9 532.3 L266.2 529.9 L268.5 532.3 Z" fill="#111"/>
<path d="M263.9 536.6 L266.2 539.0 L268.5 536.6 Z" fill="#111"/>
<text x="277.10" y="524.00" font-family="Liberation Sans, Arial, sans-serif" font-size="8.3" font-weight="normal" fill="#1a1a1a" text-anchor="start"  stroke="#1a1a1a" stroke-width="0.22" textLength="18.7" lengthAdjust="spacingAndGlyphs">Edge:</text>
<text x="277.10" y="537.10" font-family="Liberation Sans, Arial, sans-serif" font-size="8.3" font-weight="normal" fill="#1a1a1a" text-anchor="start"  stroke="#1a1a1a" stroke-width="0.22" textLength="18.7" lengthAdjust="spacingAndGlyphs">Level:</text>
<rect x="307.6" y="516.2" width="11.90" height="11.6" fill="#cce4f7" stroke="#2b8de0" stroke-width="0.7"/>
<rect x="320.6" y="516.2" width="11.20" height="11.6" fill="#e1e1e1" stroke="#c8c8c8" stroke-width="0.7"/>
<rect x="335.6" y="516.2" width="12.40" height="11.6" fill="#cce4f7" stroke="#2b8de0" stroke-width="0.7"/>
<text x="341.80" y="524.70" font-family="Liberation Sans, Arial, sans-serif" font-size="8.2" font-weight="normal" fill="#111" text-anchor="middle"  stroke="#111" stroke-width="0.22">A</text>
<rect x="349.4" y="516.2" width="13.10" height="11.6" fill="#cfcfcf" stroke="#c4c4c4" stroke-width="0.7"/>
<text x="355.95" y="524.70" font-family="Liberation Sans, Arial, sans-serif" font-size="8.2" font-weight="normal" fill="#a0a0a0" text-anchor="middle"  stroke="#a0a0a0" stroke-width="0.22">B</text>
<rect x="364.0" y="516.2" width="15.80" height="11.6" fill="#cfcfcf" stroke="#c4c4c4" stroke-width="0.7"/>
<text x="371.90" y="524.70" font-family="Liberation Sans, Arial, sans-serif" font-size="8.2" font-weight="normal" fill="#a0a0a0" text-anchor="middle"  stroke="#a0a0a0" stroke-width="0.22">Ext</text>
<path d="M310.1 524.2 H314.2 L315.0 518.0 H318.0 M312.3 521.6 H315.9" stroke="#111" stroke-width="1.15" fill="none"/>
<path d="M322.5 518.5 H326.6 L327.2 523.6 H329.9 M324.2 521.1 H328.7" stroke="#111" stroke-width="1.15" fill="none"/>
<rect x="307.4" y="529.7" width="54.60" height="15.30" fill="#fff" stroke="#9a9a9a" stroke-width="0.7"/>
<text x="310.60" y="537.90" font-family="Liberation Sans, Arial, sans-serif" font-size="8.2" font-weight="normal" fill="#1a1a1a" text-anchor="start"  stroke="#1a1a1a" stroke-width="0.22">0</text>
<rect x="362.5" y="529.7" width="18.00" height="15.30" fill="#fff" stroke="#9a9a9a" stroke-width="0.7"/>
<text x="366.90" y="537.90" font-family="Liberation Sans, Arial, sans-serif" font-size="8.2" font-weight="normal" fill="#1a1a1a" text-anchor="start"  stroke="#1a1a1a" stroke-width="0.22">V</text>
</g>
<g transform="translate(397.5,0)">
<rect x="-1.6" y="252.2" width="389" height="300" fill="#f0f0f0" stroke="#9a9a9a" stroke-width="0.8"/>
<rect x="-1.2" y="252.6" width="388.2" height="21.6" fill="#ffffff"/>
<text x="4.00" y="266.60" font-family="Liberation Sans, Arial, sans-serif" font-size="9.0" font-weight="normal" fill="#1c1c2a" text-anchor="start"  textLength="69.1" lengthAdjust="spacingAndGlyphs">Oscilloscope-XSC2</text>
<path d="M371.60 259.60 L378.40 266.40" stroke="#444" stroke-width="0.8" fill="none" />
<path d="M378.40 259.60 L371.60 266.40" stroke="#444" stroke-width="0.8" fill="none" />
<rect x="0" y="274.2" width="385.8" height="171.5" fill="#000"/>
<rect x="0" y="273.4" width="385.8" height="1" fill="#8a8a8a"/>
<path d="M4.0 278.5 H382.0 V442.5 H4.0" stroke="#b4b4b4" stroke-width="1" fill="none"/>
<rect x="384.4" y="274.2" width="1.0" height="171.5" fill="#9a9a9a"/>
<path d="M42.00 278.5 V442.0" stroke="#808080" stroke-width="1" stroke-dasharray="1.42 1.41" fill="none"/>
<path d="M80.00 278.5 V442.0" stroke="#808080" stroke-width="1" stroke-dasharray="1.42 1.41" fill="none"/>
<path d="M117.00 278.5 V442.0" stroke="#808080" stroke-width="1" stroke-dasharray="1.42 1.41" fill="none"/>
<path d="M155.00 278.5 V442.0" stroke="#808080" stroke-width="1" stroke-dasharray="1.42 1.41" fill="none"/>
<path d="M193.00 278.5 V442.0" stroke="#808080" stroke-width="1" stroke-dasharray="1.42 1.41" fill="none"/>
<path d="M231.00 278.5 V442.0" stroke="#808080" stroke-width="1" stroke-dasharray="1.42 1.41" fill="none"/>
<path d="M269.00 278.5 V442.0" stroke="#808080" stroke-width="1" stroke-dasharray="1.42 1.41" fill="none"/>
<path d="M306.00 278.5 V442.0" stroke="#808080" stroke-width="1" stroke-dasharray="1.42 1.41" fill="none"/>
<path d="M344.00 278.5 V442.0" stroke="#808080" stroke-width="1" stroke-dasharray="1.42 1.41" fill="none"/>
<path d="M5.0 306.50 H382.0" stroke="#808080" stroke-width="1" stroke-dasharray="1.42 1.41" fill="none"/>
<path d="M5.0 333.50 H382.0" stroke="#808080" stroke-width="1" stroke-dasharray="1.42 1.41" fill="none"/>
<path d="M5.0 387.50 H382.0" stroke="#808080" stroke-width="1" stroke-dasharray="1.42 1.41" fill="none"/>
<path d="M5.0 414.50 H382.0" stroke="#808080" stroke-width="1" stroke-dasharray="1.42 1.41" fill="none"/>
<path d="M4.0 360.50 H382.0" stroke="#c4c4c4" stroke-width="0.85" fill="none"/>
<path d="M4.00 359.10 V361.90M11.56 359.10 V361.90M19.12 359.10 V361.90M26.68 359.10 V361.90M34.24 359.10 V361.90M41.80 359.10 V361.90M49.36 359.10 V361.90M56.92 359.10 V361.90M64.48 359.10 V361.90M72.04 359.10 V361.90M79.60 359.10 V361.90M87.16 359.10 V361.90M94.72 359.10 V361.90M102.28 359.10 V361.90M109.84 359.10 V361.90M117.40 359.10 V361.90M124.96 359.10 V361.90M132.52 359.10 V361.90M140.08 359.10 V361.90M147.64 359.10 V361.90M155.20 359.10 V361.90M162.76 359.10 V361.90M170.32 359.10 V361.90M177.88 359.10 V361.90M185.44 359.10 V361.90M193.00 359.10 V361.90M200.56 359.10 V361.90M208.12 359.10 V361.90M215.68 359.10 V361.90M223.24 359.10 V361.90M230.80 359.10 V361.90M238.36 359.10 V361.90M245.92 359.10 V361.90M253.48 359.10 V361.90M261.04 359.10 V361.90M268.60 359.10 V361.90M276.16 359.10 V361.90M283.72 359.10 V361.90M291.28 359.10 V361.90M298.84 359.10 V361.90M306.40 359.10 V361.90M313.96 359.10 V361.90M321.52 359.10 V361.90M329.08 359.10 V361.90M336.64 359.10 V361.90M344.20 359.10 V361.90M351.76 359.10 V361.90M359.32 359.10 V361.90M366.88 359.10 V361.90M374.44 359.10 V361.90M382.00 359.10 V361.90" stroke="#b0b0b0" stroke-width="0.6" fill="none"/>
<rect x="3.4" y="277.5" width="1.2" height="165" fill="#0c980c"/>
<path d="M0.3999999999999999 275.2 H7.6 L4.0 279.2 Z" fill="#d020d0"/>
<path d="M0.3999999999999999 275.3 H7.6" stroke="#20c8d8" stroke-width="0.8"/>
<path d="M4.00 345.20 L4.50 345.16 L5.00 345.04 L5.50 344.84 L6.00 344.57 L6.50 344.21 L7.00 343.79 L7.50 343.29 L8.00 342.73 L8.50 342.11 L9.00 341.42 L9.50 340.69 L10.00 339.90 L10.50 339.07 L11.00 338.20 L11.50 337.30 L12.00 336.38 L12.49 335.43 L12.99 334.48 L13.49 333.52 L13.99 332.55 L14.49 331.60 L14.99 330.66 L15.49 329.74 L15.99 328.84 L16.49 327.98 L16.99 327.16 L17.49 326.38 L17.99 325.65 L18.49 324.98 L18.99 324.36 L19.49 323.81 L19.99 323.33 L20.49 322.92 L20.99 322.58 L21.49 322.32 L21.99 322.13 L22.49 322.03 L22.99 322.00 L23.49 322.06 L23.99 322.19 L24.49 322.40 L24.99 322.69 L25.49 323.06 L25.99 323.49 L26.49 324.00 L26.99 324.57 L27.49 325.21 L27.99 325.90 L28.48 326.65 L28.98 327.44 L29.48 328.28 L29.98 329.15 L30.48 330.06 L30.98 330.99 L31.48 331.93 L31.98 332.89 L32.48 333.85 L32.98 334.82 L33.48 335.77 L33.98 336.71 L34.48 337.62 L34.98 338.51 L35.48 339.37 L35.98 340.18 L36.48 340.95 L36.98 341.67 L37.48 342.33 L37.98 342.94 L38.48 343.48 L38.98 343.95 L39.48 344.35 L39.98 344.67 L40.48 344.92 L40.98 345.09 L41.48 345.18 L41.98 345.20 L42.48 345.13 L42.98 344.98 L43.48 344.75 L43.98 344.45 L44.47 344.07 L44.97 343.62 L45.47 343.10 L45.97 342.52 L46.47 341.87 L46.97 341.17 L47.47 340.41 L47.97 339.61 L48.47 338.77 L48.97 337.89 L49.47 336.98 L49.97 336.05 L50.47 335.10 L50.97 334.14 L51.47 333.18 L51.97 332.22 L52.47 331.26 L52.97 330.33 L53.47 329.42 L53.97 328.53 L54.47 327.69 L54.97 326.88 L55.47 326.12 L55.97 325.41 L56.47 324.75 L56.97 324.16 L57.47 323.64 L57.97 323.18 L58.47 322.79 L58.97 322.48 L59.47 322.24 L59.96 322.09 L60.46 322.01 L60.96 322.01 L61.46 322.09 L61.96 322.25 L62.46 322.49 L62.96 322.81 L63.46 323.20 L63.96 323.66 L64.46 324.20 L64.96 324.79 L65.46 325.45 L65.96 326.16 L66.46 326.92 L66.96 327.73 L67.46 328.58 L67.96 329.47 L68.46 330.38 L68.96 331.32 L69.46 332.27 L69.96 333.23 L70.46 334.19 L70.96 335.15 L71.46 336.10 L71.96 337.03 L72.46 337.94 L72.96 338.82 L73.46 339.66 L73.96 340.46 L74.46 341.21 L74.96 341.91 L75.46 342.55 L75.96 343.14 L76.45 343.65 L76.95 344.10 L77.45 344.47 L77.95 344.77 L78.45 344.99 L78.95 345.13 L79.45 345.20 L79.95 345.18 L80.45 345.08 L80.95 344.91 L81.45 344.65 L81.95 344.33 L82.45 343.92 L82.95 343.45 L83.45 342.90 L83.95 342.30 L84.45 341.63 L84.95 340.91 L85.45 340.14 L85.95 339.32 L86.45 338.46 L86.95 337.57 L87.45 336.65 L87.95 335.71 L88.45 334.76 L88.95 333.80 L89.45 332.84 L89.95 331.88 L90.45 330.93 L90.95 330.01 L91.45 329.10 L91.95 328.23 L92.44 327.40 L92.94 326.60 L93.44 325.86 L93.94 325.17 L94.44 324.54 L94.94 323.97 L95.44 323.47 L95.94 323.03 L96.44 322.67 L96.94 322.39 L97.44 322.18 L97.94 322.05 L98.44 322.00 L98.94 322.03 L99.44 322.14 L99.94 322.33 L100.44 322.60 L100.94 322.94 L101.44 323.36 L101.94 323.84 L102.44 324.40 L102.94 325.02 L103.44 325.69 L103.94 326.42 L104.44 327.21 L104.94 328.03 L105.44 328.89 L105.94 329.79 L106.44 330.71 L106.94 331.65 L107.44 332.61 L107.94 333.57 L108.43 334.53 L108.93 335.49 L109.43 336.43 L109.93 337.36 L110.43 338.25 L110.93 339.12 L111.43 339.95 L111.93 340.73 L112.43 341.46 L112.93 342.15 L113.43 342.77 L113.93 343.32 L114.43 343.82 L114.93 344.24 L115.43 344.58 L115.93 344.86 L116.43 345.05 L116.93 345.16 L117.43 345.20 L117.93 345.16 L118.43 345.03 L118.93 344.83 L119.43 344.55 L119.93 344.19 L120.43 343.76 L120.93 343.26 L121.43 342.70 L121.93 342.07 L122.43 341.38 L122.93 340.64 L123.43 339.85 L123.92 339.02 L124.42 338.15 L124.92 337.25 L125.42 336.32 L125.92 335.38 L126.42 334.42 L126.92 333.46 L127.42 332.50 L127.92 331.54 L128.42 330.60 L128.92 329.68 L129.42 328.79 L129.92 327.93 L130.42 327.11 L130.92 326.34 L131.42 325.61 L131.92 324.94 L132.42 324.33 L132.92 323.78 L133.42 323.30 L133.92 322.90 L134.42 322.56 L134.92 322.30 L135.42 322.12 L135.92 322.02 L136.42 322.00 L136.92 322.06 L137.42 322.20 L137.92 322.42 L138.42 322.71 L138.92 323.08 L139.42 323.52 L139.92 324.03 L140.41 324.61 L140.91 325.25 L141.41 325.94 L141.91 326.69 L142.41 327.49 L142.91 328.33 L143.41 329.21 L143.91 330.11 L144.41 331.04 L144.91 331.99 L145.41 332.95 L145.91 333.91 L146.41 334.87 L146.91 335.82 L147.41 336.76 L147.91 337.68 L148.41 338.56 L148.91 339.42 L149.41 340.23 L149.91 341.00 L150.41 341.71 L150.91 342.37 L151.41 342.97 L151.91 343.51 L152.41 343.97 L152.91 344.37 L153.41 344.69 L153.91 344.93 L154.41 345.10 L154.91 345.19 L155.41 345.19 L155.91 345.12 L156.40 344.97 L156.90 344.74 L157.40 344.43 L157.90 344.05 L158.40 343.59 L158.90 343.07 L159.40 342.48 L159.90 341.83 L160.40 341.13 L160.90 340.37 L161.40 339.56 L161.90 338.72 L162.40 337.84 L162.90 336.93 L163.40 335.99 L163.90 335.04 L164.40 334.08 L164.90 333.12 L165.40 332.16 L165.90 331.21 L166.40 330.28 L166.90 329.37 L167.40 328.48 L167.90 327.64 L168.40 326.83 L168.90 326.07 L169.40 325.37 L169.90 324.72 L170.40 324.13 L170.90 323.61 L171.40 323.15 L171.90 322.77 L172.39 322.46 L172.89 322.23 L173.39 322.08 L173.89 322.01 L174.39 322.01 L174.89 322.10 L175.39 322.27 L175.89 322.51 L176.39 322.83 L176.89 323.23 L177.39 323.69 L177.89 324.23 L178.39 324.83 L178.89 325.49 L179.39 326.20 L179.89 326.97 L180.39 327.78 L180.89 328.64 L181.39 329.52 L181.89 330.44 L182.39 331.37 L182.89 332.33 L183.39 333.29 L183.89 334.25 L184.39 335.21 L184.89 336.16 L185.39 337.09 L185.89 337.99 L186.39 338.87 L186.89 339.71 L187.39 340.50 L187.89 341.25 L188.38 341.95 L188.88 342.59 L189.38 343.17 L189.88 343.68 L190.38 344.12 L190.88 344.49 L191.38 344.78 L191.88 345.00 L192.38 345.14 L192.88 345.20 L193.38 345.18 L193.88 345.08 L194.38 344.90 L194.88 344.64 L195.38 344.30 L195.88 343.90 L196.38 343.42 L196.88 342.87 L197.38 342.26 L197.88 341.59 L198.38 340.86 L198.88 340.09 L199.38 339.27 L199.88 338.41 L200.38 337.52 L200.88 336.60 L201.38 335.66 L201.88 334.70 L202.38 333.74 L202.88 332.78 L203.38 331.82 L203.88 330.88 L204.37 329.95 L204.87 329.05 L205.37 328.18 L205.87 327.35 L206.37 326.56 L206.87 325.82 L207.37 325.13 L207.87 324.50 L208.37 323.94 L208.87 323.44 L209.37 323.01 L209.87 322.65 L210.37 322.37 L210.87 322.17 L211.37 322.04 L211.87 322.00 L212.37 322.04 L212.87 322.15 L213.37 322.34 L213.87 322.62 L214.37 322.96 L214.87 323.38 L215.37 323.87 L215.87 324.43 L216.37 325.05 L216.87 325.73 L217.37 326.47 L217.87 327.25 L218.37 328.08 L218.87 328.94 L219.37 329.84 L219.87 330.77 L220.36 331.71 L220.86 332.66 L221.36 333.63 L221.86 334.59 L222.36 335.54 L222.86 336.49 L223.36 337.41 L223.86 338.30 L224.36 339.17 L224.86 339.99 L225.36 340.77 L225.86 341.51 L226.36 342.18 L226.86 342.80 L227.36 343.36 L227.86 343.84 L228.36 344.26 L228.86 344.60 L229.36 344.87 L229.86 345.06 L230.36 345.17 L230.86 345.20 L231.36 345.15 L231.86 345.02 L232.36 344.81 L232.86 344.53 L233.36 344.17 L233.86 343.74 L234.36 343.23 L234.86 342.66 L235.36 342.03 L235.86 341.34 L236.35 340.60 L236.85 339.81 L237.35 338.97 L237.85 338.10 L238.35 337.20 L238.85 336.27 L239.35 335.32 L239.85 334.37 L240.35 333.40 L240.85 332.44 L241.35 331.49 L241.85 330.55 L242.35 329.63 L242.85 328.74 L243.35 327.88 L243.85 327.07 L244.35 326.29 L244.85 325.57 L245.35 324.90 L245.85 324.30 L246.35 323.75 L246.85 323.28 L247.35 322.88 L247.85 322.55 L248.35 322.29 L248.85 322.12 L249.35 322.02 L249.85 322.00 L250.35 322.07 L250.85 322.21 L251.35 322.43 L251.85 322.73 L252.34 323.10 L252.84 323.55 L253.34 324.06 L253.84 324.64 L254.34 325.29 L254.84 325.99 L255.34 326.74 L255.84 327.54 L256.34 328.38 L256.84 329.26 L257.34 330.17 L257.84 331.10 L258.34 332.04 L258.84 333.00 L259.34 333.97 L259.84 334.93 L260.34 335.88 L260.84 336.81 L261.34 337.73 L261.84 338.61 L262.34 339.46 L262.84 340.27 L263.34 341.04 L263.84 341.75 L264.34 342.41 L264.84 343.00 L265.34 343.53 L265.84 344.00 L266.34 344.39 L266.84 344.70 L267.34 344.94 L267.83 345.11 L268.33 345.19 L268.83 345.19 L269.33 345.11 L269.83 344.96 L270.33 344.72 L270.83 344.41 L271.33 344.02 L271.83 343.57 L272.33 343.04 L272.83 342.45 L273.33 341.79 L273.83 341.08 L274.33 340.32 L274.83 339.52 L275.33 338.67 L275.83 337.78 L276.33 336.87 L276.83 335.94 L277.33 334.99 L277.83 334.03 L278.33 333.06 L278.83 332.10 L279.33 331.15 L279.83 330.22 L280.33 329.31 L280.83 328.43 L281.33 327.59 L281.83 326.79 L282.33 326.03 L282.83 325.33 L283.33 324.68 L283.82 324.10 L284.32 323.58 L284.82 323.13 L285.32 322.75 L285.82 322.45 L286.32 322.22 L286.82 322.07 L287.32 322.01 L287.82 322.02 L288.32 322.11 L288.82 322.28 L289.32 322.53 L289.82 322.85 L290.32 323.25 L290.82 323.72 L291.32 324.26 L291.82 324.86 L292.32 325.53 L292.82 326.25 L293.32 327.02 L293.82 327.83 L294.32 328.69 L294.82 329.57 L295.32 330.49 L295.82 331.43 L296.32 332.38 L296.82 333.34 L297.32 334.31 L297.82 335.26 L298.32 336.21 L298.82 337.14 L299.32 338.04 L299.81 338.92 L300.31 339.75 L300.81 340.55 L301.31 341.30 L301.81 341.99 L302.31 342.63 L302.81 343.20 L303.31 343.71 L303.81 344.14 L304.31 344.51 L304.81 344.80 L305.31 345.01 L305.81 345.14 L306.31 345.20 L306.81 345.17 L307.31 345.07 L307.81 344.88 L308.31 344.62 L308.81 344.28 L309.31 343.87 L309.81 343.39 L310.31 342.84 L310.81 342.22 L311.31 341.55 L311.81 340.82 L312.31 340.04 L312.81 339.22 L313.31 338.36 L313.81 337.47 L314.31 336.54 L314.81 335.60 L315.31 334.65 L315.81 333.69 L316.30 332.72 L316.80 331.77 L317.30 330.82 L317.80 329.90 L318.30 329.00 L318.80 328.13 L319.30 327.30 L319.80 326.52 L320.30 325.78 L320.80 325.09 L321.30 324.47 L321.80 323.91 L322.30 323.41 L322.80 322.99 L323.30 322.63 L323.80 322.36" stroke="#b40000" stroke-width="0.9" fill="none" />
<path d="M4.00 375.60 L4.50 375.64 L5.00 375.76 L5.50 375.96 L6.00 376.23 L6.50 376.59 L7.00 377.01 L7.50 377.51 L8.00 378.07 L8.50 378.69 L9.00 379.38 L9.50 380.11 L10.00 380.90 L10.50 381.73 L11.00 382.60 L11.50 383.50 L12.00 384.42 L12.49 385.37 L12.99 386.32 L13.49 387.28 L13.99 388.25 L14.49 389.20 L14.99 390.14 L15.49 391.06 L15.99 391.96 L16.49 392.82 L16.99 393.64 L17.49 394.42 L17.99 395.15 L18.49 395.82 L18.99 396.44 L19.49 396.99 L19.99 397.47 L20.49 397.88 L20.99 398.22 L21.49 398.48 L21.99 398.67 L22.49 398.77 L22.99 398.80 L23.49 398.74 L23.99 398.61 L24.49 398.40 L24.99 398.11 L25.49 397.74 L25.99 397.31 L26.49 396.80 L26.99 396.23 L27.49 395.59 L27.99 394.90 L28.48 394.15 L28.98 393.36 L29.48 392.52 L29.98 391.65 L30.48 390.74 L30.98 389.81 L31.48 388.87 L31.98 387.91 L32.48 386.95 L32.98 385.98 L33.48 385.03 L33.98 384.09 L34.48 383.18 L34.98 382.29 L35.48 381.43 L35.98 380.62 L36.48 379.85 L36.98 379.13 L37.48 378.47 L37.98 377.86 L38.48 377.32 L38.98 376.85 L39.48 376.45 L39.98 376.13 L40.48 375.88 L40.98 375.71 L41.48 375.62 L41.98 375.60 L42.48 375.67 L42.98 375.82 L43.48 376.05 L43.98 376.35 L44.47 376.73 L44.97 377.18 L45.47 377.70 L45.97 378.28 L46.47 378.93 L46.97 379.63 L47.47 380.39 L47.97 381.19 L48.47 382.03 L48.97 382.91 L49.47 383.82 L49.97 384.75 L50.47 385.70 L50.97 386.66 L51.47 387.62 L51.97 388.58 L52.47 389.54 L52.97 390.47 L53.47 391.38 L53.97 392.27 L54.47 393.11 L54.97 393.92 L55.47 394.68 L55.97 395.39 L56.47 396.05 L56.97 396.64 L57.47 397.16 L57.97 397.62 L58.47 398.01 L58.97 398.32 L59.47 398.56 L59.96 398.71 L60.46 398.79 L60.96 398.79 L61.46 398.71 L61.96 398.55 L62.46 398.31 L62.96 397.99 L63.46 397.60 L63.96 397.14 L64.46 396.60 L64.96 396.01 L65.46 395.35 L65.96 394.64 L66.46 393.88 L66.96 393.07 L67.46 392.22 L67.96 391.33 L68.46 390.42 L68.96 389.48 L69.46 388.53 L69.96 387.57 L70.46 386.61 L70.96 385.65 L71.46 384.70 L71.96 383.77 L72.46 382.86 L72.96 381.98 L73.46 381.14 L73.96 380.34 L74.46 379.59 L74.96 378.89 L75.46 378.25 L75.96 377.66 L76.45 377.15 L76.95 376.70 L77.45 376.33 L77.95 376.03 L78.45 375.81 L78.95 375.67 L79.45 375.60 L79.95 375.62 L80.45 375.72 L80.95 375.89 L81.45 376.15 L81.95 376.47 L82.45 376.88 L82.95 377.35 L83.45 377.90 L83.95 378.50 L84.45 379.17 L84.95 379.89 L85.45 380.66 L85.95 381.48 L86.45 382.34 L86.95 383.23 L87.45 384.15 L87.95 385.09 L88.45 386.04 L88.95 387.00 L89.45 387.96 L89.95 388.92 L90.45 389.87 L90.95 390.79 L91.45 391.70 L91.95 392.57 L92.44 393.40 L92.94 394.20 L93.44 394.94 L93.94 395.63 L94.44 396.26 L94.94 396.83 L95.44 397.33 L95.94 397.77 L96.44 398.13 L96.94 398.41 L97.44 398.62 L97.94 398.75 L98.44 398.80 L98.94 398.77 L99.44 398.66 L99.94 398.47 L100.44 398.20 L100.94 397.86 L101.44 397.44 L101.94 396.96 L102.44 396.40 L102.94 395.78 L103.44 395.11 L103.94 394.38 L104.44 393.59 L104.94 392.77 L105.44 391.91 L105.94 391.01 L106.44 390.09 L106.94 389.15 L107.44 388.19 L107.94 387.23 L108.43 386.27 L108.93 385.31 L109.43 384.37 L109.93 383.44 L110.43 382.55 L110.93 381.68 L111.43 380.85 L111.93 380.07 L112.43 379.34 L112.93 378.65 L113.43 378.03 L113.93 377.48 L114.43 376.98 L114.93 376.56 L115.43 376.22 L115.93 375.94 L116.43 375.75 L116.93 375.64 L117.43 375.60 L117.93 375.64 L118.43 375.77 L118.93 375.97 L119.43 376.25 L119.93 376.61 L120.43 377.04 L120.93 377.54 L121.43 378.10 L121.93 378.73 L122.43 379.42 L122.93 380.16 L123.43 380.95 L123.92 381.78 L124.42 382.65 L124.92 383.55 L125.42 384.48 L125.92 385.42 L126.42 386.38 L126.92 387.34 L127.42 388.30 L127.92 389.26 L128.42 390.20 L128.92 391.12 L129.42 392.01 L129.92 392.87 L130.42 393.69 L130.92 394.46 L131.42 395.19 L131.92 395.86 L132.42 396.47 L132.92 397.02 L133.42 397.50 L133.92 397.90 L134.42 398.24 L134.92 398.50 L135.42 398.68 L135.92 398.78 L136.42 398.80 L136.92 398.74 L137.42 398.60 L137.92 398.38 L138.42 398.09 L138.92 397.72 L139.42 397.28 L139.92 396.77 L140.41 396.19 L140.91 395.55 L141.41 394.86 L141.91 394.11 L142.41 393.31 L142.91 392.47 L143.41 391.59 L143.91 390.69 L144.41 389.76 L144.91 388.81 L145.41 387.85 L145.91 386.89 L146.41 385.93 L146.91 384.98 L147.41 384.04 L147.91 383.12 L148.41 382.24 L148.91 381.38 L149.41 380.57 L149.91 379.80 L150.41 379.09 L150.91 378.43 L151.41 377.83 L151.91 377.29 L152.41 376.83 L152.91 376.43 L153.41 376.11 L153.91 375.87 L154.41 375.70 L154.91 375.61 L155.41 375.61 L155.91 375.68 L156.40 375.83 L156.90 376.06 L157.40 376.37 L157.90 376.75 L158.40 377.21 L158.90 377.73 L159.40 378.32 L159.90 378.97 L160.40 379.67 L160.90 380.43 L161.40 381.24 L161.90 382.08 L162.40 382.96 L162.90 383.87 L163.40 384.81 L163.90 385.76 L164.40 386.72 L164.90 387.68 L165.40 388.64 L165.90 389.59 L166.40 390.52 L166.90 391.43 L167.40 392.32 L167.90 393.16 L168.40 393.97 L168.90 394.73 L169.40 395.43 L169.90 396.08 L170.40 396.67 L170.90 397.19 L171.40 397.65 L171.90 398.03 L172.39 398.34 L172.89 398.57 L173.39 398.72 L173.89 398.79 L174.39 398.79 L174.89 398.70 L175.39 398.53 L175.89 398.29 L176.39 397.97 L176.89 397.57 L177.39 397.11 L177.89 396.57 L178.39 395.97 L178.89 395.31 L179.39 394.60 L179.89 393.83 L180.39 393.02 L180.89 392.16 L181.39 391.28 L181.89 390.36 L182.39 389.43 L182.89 388.47 L183.39 387.51 L183.89 386.55 L184.39 385.59 L184.89 384.64 L185.39 383.71 L185.89 382.81 L186.39 381.93 L186.89 381.09 L187.39 380.30 L187.89 379.55 L188.38 378.85 L188.88 378.21 L189.38 377.63 L189.88 377.12 L190.38 376.68 L190.88 376.31 L191.38 376.02 L191.88 375.80 L192.38 375.66 L192.88 375.60 L193.38 375.62 L193.88 375.72 L194.38 375.90 L194.88 376.16 L195.38 376.50 L195.88 376.90 L196.38 377.38 L196.88 377.93 L197.38 378.54 L197.88 379.21 L198.38 379.94 L198.88 380.71 L199.38 381.53 L199.88 382.39 L200.38 383.28 L200.88 384.20 L201.38 385.14 L201.88 386.10 L202.38 387.06 L202.88 388.02 L203.38 388.98 L203.88 389.92 L204.37 390.85 L204.87 391.75 L205.37 392.62 L205.87 393.45 L206.37 394.24 L206.87 394.98 L207.37 395.67 L207.87 396.30 L208.37 396.86 L208.87 397.36 L209.37 397.79 L209.87 398.15 L210.37 398.43 L210.87 398.63 L211.37 398.76 L211.87 398.80 L212.37 398.76 L212.87 398.65 L213.37 398.46 L213.87 398.18 L214.37 397.84 L214.87 397.42 L215.37 396.93 L215.87 396.37 L216.37 395.75 L216.87 395.07 L217.37 394.33 L217.87 393.55 L218.37 392.72 L218.87 391.86 L219.37 390.96 L219.87 390.03 L220.36 389.09 L220.86 388.14 L221.36 387.17 L221.86 386.21 L222.36 385.26 L222.86 384.31 L223.36 383.39 L223.86 382.50 L224.36 381.63 L224.86 380.81 L225.36 380.03 L225.86 379.29 L226.36 378.62 L226.86 378.00 L227.36 377.44 L227.86 376.96 L228.36 376.54 L228.86 376.20 L229.36 375.93 L229.86 375.74 L230.36 375.63 L230.86 375.60 L231.36 375.65 L231.86 375.78 L232.36 375.99 L232.86 376.27 L233.36 376.63 L233.86 377.06 L234.36 377.57 L234.86 378.14 L235.36 378.77 L235.86 379.46 L236.35 380.20 L236.85 380.99 L237.35 381.83 L237.85 382.70 L238.35 383.60 L238.85 384.53 L239.35 385.48 L239.85 386.43 L240.35 387.40 L240.85 388.36 L241.35 389.31 L241.85 390.25 L242.35 391.17 L242.85 392.06 L243.35 392.92 L243.85 393.73 L244.35 394.51 L244.85 395.23 L245.35 395.90 L245.85 396.50 L246.35 397.05 L246.85 397.52 L247.35 397.92 L247.85 398.25 L248.35 398.51 L248.85 398.68 L249.35 398.78 L249.85 398.80 L250.35 398.73 L250.85 398.59 L251.35 398.37 L251.85 398.07 L252.34 397.70 L252.84 397.25 L253.34 396.74 L253.84 396.16 L254.34 395.51 L254.84 394.81 L255.34 394.06 L255.84 393.26 L256.34 392.42 L256.84 391.54 L257.34 390.63 L257.84 389.70 L258.34 388.76 L258.84 387.80 L259.34 386.83 L259.84 385.87 L260.34 384.92 L260.84 383.99 L261.34 383.07 L261.84 382.19 L262.34 381.34 L262.84 380.53 L263.34 379.76 L263.84 379.05 L264.34 378.39 L264.84 377.80 L265.34 377.27 L265.84 376.80 L266.34 376.41 L266.84 376.10 L267.34 375.86 L267.83 375.69 L268.33 375.61 L268.83 375.61 L269.33 375.69 L269.83 375.84 L270.33 376.08 L270.83 376.39 L271.33 376.78 L271.83 377.23 L272.33 377.76 L272.83 378.35 L273.33 379.01 L273.83 379.72 L274.33 380.48 L274.83 381.28 L275.33 382.13 L275.83 383.02 L276.33 383.93 L276.83 384.86 L277.33 385.81 L277.83 386.77 L278.33 387.74 L278.83 388.70 L279.33 389.65 L279.83 390.58 L280.33 391.49 L280.83 392.37 L281.33 393.21 L281.83 394.01 L282.33 394.77 L282.83 395.47 L283.33 396.12 L283.82 396.70 L284.32 397.22 L284.82 397.67 L285.32 398.05 L285.82 398.35 L286.32 398.58 L286.82 398.73 L287.32 398.79 L287.82 398.78 L288.32 398.69 L288.82 398.52 L289.32 398.27 L289.82 397.95 L290.32 397.55 L290.82 397.08 L291.32 396.54 L291.82 395.94 L292.32 395.27 L292.82 394.55 L293.32 393.78 L293.82 392.97 L294.32 392.11 L294.82 391.23 L295.32 390.31 L295.82 389.37 L296.32 388.42 L296.82 387.46 L297.32 386.49 L297.82 385.54 L298.32 384.59 L298.82 383.66 L299.32 382.76 L299.81 381.88 L300.31 381.05 L300.81 380.25 L301.31 379.50 L301.81 378.81 L302.31 378.17 L302.81 377.60 L303.31 377.09 L303.81 376.66 L304.31 376.29 L304.81 376.00 L305.31 375.79 L305.81 375.66 L306.31 375.60 L306.81 375.63 L307.31 375.73 L307.81 375.92 L308.31 376.18 L308.81 376.52 L309.31 376.93 L309.81 377.41 L310.31 377.96 L310.81 378.58 L311.31 379.25 L311.81 379.98 L312.31 380.76 L312.81 381.58 L313.31 382.44 L313.81 383.33 L314.31 384.26 L314.81 385.20 L315.31 386.15 L315.81 387.11 L316.30 388.08 L316.80 389.03 L317.30 389.98 L317.80 390.90 L318.30 391.80 L318.80 392.67 L319.30 393.50 L319.80 394.28 L320.30 395.02 L320.80 395.71 L321.30 396.33 L321.80 396.89 L322.30 397.39 L322.80 397.81 L323.30 398.17 L323.80 398.44" stroke="#b40000" stroke-width="0.9" fill="none" />
<circle cx="4.0" cy="375.4" r="1.0" fill="none" stroke="#c030c0" stroke-width="0.6"/>
<rect x="0" y="445.7" width="385.8" height="12" fill="#f0f0f0"/>
<rect x="348.6" y="447.8" width="25.6" height="7.6" fill="#cdcdcd"/>
<path d="M5.6 449.6 L3.4 451.5 L5.6 453.4" stroke="#555" stroke-width="0.7" fill="none"/>
<path d="M379.6 449.6 L381.8 451.5 L379.6 453.4" stroke="#555" stroke-width="0.7" fill="none"/>
<rect x="-3" y="458.8" width="43.8" height="39.6" fill="none" stroke="#d5d5d5" stroke-width="0.8"/>
<text x="3.10" y="470.80" font-family="Liberation Sans, Arial, sans-serif" font-size="8.3" font-weight="normal" fill="#1a1a1a" text-anchor="start"  stroke="#1a1a1a" stroke-width="0.22">T1</text>
<text x="3.10" y="481.50" font-family="Liberation Sans, Arial, sans-serif" font-size="8.3" font-weight="normal" fill="#1a1a1a" text-anchor="start"  stroke="#1a1a1a" stroke-width="0.22">T2</text>
<text x="3.10" y="494.60" font-family="Liberation Sans, Arial, sans-serif" font-size="8.3" font-weight="normal" fill="#1a1a1a" text-anchor="start"  stroke="#1a1a1a" stroke-width="0.22" textLength="20.1" lengthAdjust="spacingAndGlyphs">T2-T1</text>
<rect x="17.3" y="463.2" width="9.0" height="10.2" fill="#e1e1e1" stroke="#d0d0d0" stroke-width="0.5"/>
<rect x="28.8" y="463.2" width="9.0" height="10.2" fill="#e1e1e1" stroke="#d0d0d0" stroke-width="0.5"/>
<path d="M19.2 468.4 L22.2 465.79999999999995 V467.59999999999997 H24.8 V469.2 H22.2 V471.0 Z" fill="#000"/>
<path d="M36.4 468.4 L33.4 465.79999999999995 V467.59999999999997 H30.8 V469.2 H33.4 V471.0 Z" fill="#000"/>
<rect x="17.3" y="475.6" width="9.0" height="10.2" fill="#e1e1e1" stroke="#d0d0d0" stroke-width="0.5"/>
<rect x="28.8" y="475.6" width="9.0" height="10.2" fill="#e1e1e1" stroke="#d0d0d0" stroke-width="0.5"/>
<path d="M19.2 480.8 L22.2 478.2 V480.0 H24.8 V481.6 H22.2 V483.40000000000003 Z" fill="#000"/>
<path d="M36.4 480.8 L33.4 478.2 V480.0 H30.8 V481.6 H33.4 V483.40000000000003 Z" fill="#000"/>
<rect x="41.7" y="458.6" width="227" height="39.5" fill="#fff" stroke="#c8c8c8" stroke-width="0.6"/>
<path d="M41.7 498 V458.7 H268.7" stroke="#6a6a6a" stroke-width="0.9" fill="none"/>
<text x="61.30" y="466.60" font-family="Liberation Sans, Arial, sans-serif" font-size="8.3" font-weight="normal" fill="#1a1a1a" text-anchor="start"  stroke="#1a1a1a" stroke-width="0.22" textLength="16.8" lengthAdjust="spacingAndGlyphs">Time</text>
<text x="54.10" y="475.30" font-family="Liberation Sans, Arial, sans-serif" font-size="8.3" font-weight="normal" fill="#1a1a1a" text-anchor="start"  stroke="#1a1a1a" stroke-width="0.22" textLength="24.5" lengthAdjust="spacingAndGlyphs">2.885 s</text>
<text x="54.10" y="484.30" font-family="Liberation Sans, Arial, sans-serif" font-size="8.3" font-weight="normal" fill="#1a1a1a" text-anchor="start"  stroke="#1a1a1a" stroke-width="0.22" textLength="24.5" lengthAdjust="spacingAndGlyphs">2.885 s</text>
<text x="54.10" y="493.40" font-family="Liberation Sans, Arial, sans-serif" font-size="8.3" font-weight="normal" fill="#1a1a1a" text-anchor="start"  stroke="#1a1a1a" stroke-width="0.22" textLength="24.5" lengthAdjust="spacingAndGlyphs">0.000 s</text>
<text x="102.00" y="466.60" font-family="Liberation Sans, Arial, sans-serif" font-size="8.3" font-weight="normal" fill="#1a1a1a" text-anchor="start"  stroke="#1a1a1a" stroke-width="0.22" textLength="36" lengthAdjust="spacingAndGlyphs">Channel<tspan dy="-0.9">_</tspan><tspan dy="0.9">A</tspan></text>
<text x="104.60" y="475.30" font-family="Liberation Sans, Arial, sans-serif" font-size="8.3" font-weight="normal" fill="#1a1a1a" text-anchor="start"  stroke="#1a1a1a" stroke-width="0.22" textLength="30.2" lengthAdjust="spacingAndGlyphs">21.065 V</text>
<text x="104.60" y="484.30" font-family="Liberation Sans, Arial, sans-serif" font-size="8.3" font-weight="normal" fill="#1a1a1a" text-anchor="start"  stroke="#1a1a1a" stroke-width="0.22" textLength="30.2" lengthAdjust="spacingAndGlyphs">21.065 V</text>
<text x="107.00" y="493.40" font-family="Liberation Sans, Arial, sans-serif" font-size="8.3" font-weight="normal" fill="#1a1a1a" text-anchor="start"  stroke="#1a1a1a" stroke-width="0.22" textLength="25.7" lengthAdjust="spacingAndGlyphs">0.000 V</text>
<text x="155.00" y="466.60" font-family="Liberation Sans, Arial, sans-serif" font-size="8.3" font-weight="normal" fill="#1a1a1a" text-anchor="start"  stroke="#1a1a1a" stroke-width="0.22" textLength="35.4" lengthAdjust="spacingAndGlyphs">Channel<tspan dy="-0.9">_</tspan><tspan dy="0.9">B</tspan></text>
<text x="155.00" y="475.30" font-family="Liberation Sans, Arial, sans-serif" font-size="8.3" font-weight="normal" fill="#1a1a1a" text-anchor="start"  stroke="#1a1a1a" stroke-width="0.22" textLength="32.6" lengthAdjust="spacingAndGlyphs">-21.065 V</text>
<text x="155.00" y="484.30" font-family="Liberation Sans, Arial, sans-serif" font-size="8.3" font-weight="normal" fill="#1a1a1a" text-anchor="start"  stroke="#1a1a1a" stroke-width="0.22" textLength="32.6" lengthAdjust="spacingAndGlyphs">-21.065 V</text>
<text x="160.00" y="493.40" font-family="Liberation Sans, Arial, sans-serif" font-size="8.3" font-weight="normal" fill="#1a1a1a" text-anchor="start"  stroke="#1a1a1a" stroke-width="0.22" textLength="25.9" lengthAdjust="spacingAndGlyphs">0.000 V</text>
<rect x="275.3" y="463.3" width="43.5" height="14" fill="#e1e1e1" stroke="#adadad" stroke-width="0.6"/>
<text x="283.80" y="473.50" font-family="Liberation Sans, Arial, sans-serif" font-size="8.3" font-weight="normal" fill="#1a1a1a" text-anchor="start"  stroke="#1a1a1a" stroke-width="0.22" textLength="25.7" lengthAdjust="spacingAndGlyphs">Reverse</text>
<rect x="275.3" y="482.5" width="43.5" height="14" fill="#e1e1e1" stroke="#adadad" stroke-width="0.6"/>
<text x="289.00" y="492.40" font-family="Liberation Sans, Arial, sans-serif" font-size="8.3" font-weight="normal" fill="#1a1a1a" text-anchor="start"  stroke="#1a1a1a" stroke-width="0.22" textLength="15.3" lengthAdjust="spacingAndGlyphs">Save</text>
<text x="324.70" y="499.40" font-family="Liberation Sans, Arial, sans-serif" font-size="8.3" font-weight="normal" fill="#1a1a1a" text-anchor="start"  stroke="#1a1a1a" stroke-width="0.22" textLength="37.3" lengthAdjust="spacingAndGlyphs">Ext. trigger</text>
<circle cx="370" cy="497" r="4.0" fill="#fff" stroke="#c4c4c4" stroke-width="0.7"/>
<path d="M-3 545 V508.8 H90.0 V545" stroke="#dcdcdc" stroke-width="0.8" fill="none"/>
<rect x="2.5" y="505" width="32.3" height="8" fill="#f0f0f0"/>
<text x="3.50" y="511.60" font-family="Liberation Sans, Arial, sans-serif" font-size="8.3" font-weight="normal" fill="#1a1a1a" text-anchor="start"  stroke="#1a1a1a" stroke-width="0.22" textLength="30.3" lengthAdjust="spacingAndGlyphs">Timebase</text>
<path d="M91.2 545 V508.8 H181.8 V545" stroke="#dcdcdc" stroke-width="0.8" fill="none"/>
<rect x="94.0" y="505" width="35.8" height="8" fill="#f0f0f0"/>
<text x="95.00" y="511.60" font-family="Liberation Sans, Arial, sans-serif" font-size="8.3" font-weight="normal" fill="#1a1a1a" text-anchor="start"  stroke="#1a1a1a" stroke-width="0.22" textLength="33.8" lengthAdjust="spacingAndGlyphs">Channel A</text>
<path d="M183.0 545 V508.8 H274.0 V545" stroke="#dcdcdc" stroke-width="0.8" fill="none"/>
<rect x="185.2" y="505" width="35.8" height="8" fill="#f0f0f0"/>
<text x="186.20" y="511.60" font-family="Liberation Sans, Arial, sans-serif" font-size="8.3" font-weight="normal" fill="#1a1a1a" text-anchor="start"  stroke="#1a1a1a" stroke-width="0.22" textLength="33.8" lengthAdjust="spacingAndGlyphs">Channel B</text>
<path d="M275.2 545 V508.8 H384.0 V545" stroke="#dcdcdc" stroke-width="0.8" fill="none"/>
<rect x="278.0" y="505" width="26.3" height="8" fill="#f0f0f0"/>
<text x="279.00" y="511.60" font-family="Liberation Sans, Arial, sans-serif" font-size="8.3" font-weight="normal" fill="#1a1a1a" text-anchor="start"  stroke="#1a1a1a" stroke-width="0.22" textLength="24.3" lengthAdjust="spacingAndGlyphs">Trigger</text>
<text x="0.60" y="523.80" font-family="Liberation Sans, Arial, sans-serif" font-size="8.3" font-weight="normal" fill="#1a1a1a" text-anchor="start"  stroke="#1a1a1a" stroke-width="0.22" textLength="19.4" lengthAdjust="spacingAndGlyphs">Scale:</text>
<rect x="26.5" y="513.5" width="59.80" height="12.80" fill="#fff" stroke="#9a9a9a" stroke-width="0.7"/>
<text x="29.40" y="522.00" font-family="Liberation Sans, Arial, sans-serif" font-size="8.2" font-weight="normal" fill="#1a1a1a" text-anchor="start"  stroke="#1a1a1a" stroke-width="0.22">20 ms/Div</text>
<text x="0.60" y="536.90" font-family="Liberation Sans, Arial, sans-serif" font-size="8.3" font-weight="normal" fill="#1a1a1a" text-anchor="start"  stroke="#1a1a1a" stroke-width="0.22" textLength="39.4" lengthAdjust="spacingAndGlyphs">X pos.(Div):</text>
<rect x="43.4" y="528.5" width="42.90" height="16.50" fill="#fff" stroke="#9a9a9a" stroke-width="0.7"/>
<text x="46.20" y="537.00" font-family="Liberation Sans, Arial, sans-serif" font-size="8.2" font-weight="normal" fill="#1a1a1a" text-anchor="start"  stroke="#1a1a1a" stroke-width="0.22">0</text>
<text x="93.10" y="523.80" font-family="Liberation Sans, Arial, sans-serif" font-size="8.3" font-weight="normal" fill="#1a1a1a" text-anchor="start"  stroke="#1a1a1a" stroke-width="0.22" textLength="19.4" lengthAdjust="spacingAndGlyphs">Scale:</text>
<rect x="117.3" y="513.5" width="62.10" height="12.80" fill="#fff" stroke="#9a9a9a" stroke-width="0.7"/>
<text x="120.60" y="522.00" font-family="Liberation Sans, Arial, sans-serif" font-size="8.2" font-weight="normal" fill="#1a1a1a" text-anchor="start"  stroke="#1a1a1a" stroke-width="0.22">50  V/Div</text>
<text x="93.10" y="536.90" font-family="Liberation Sans, Arial, sans-serif" font-size="8.3" font-weight="normal" fill="#1a1a1a" text-anchor="start"  stroke="#1a1a1a" stroke-width="0.22" textLength="40" lengthAdjust="spacingAndGlyphs">Y pos.(Div):</text>
<rect x="136.3" y="528.5" width="43.10" height="16.50" fill="#fff" stroke="#9a9a9a" stroke-width="0.7"/>
<text x="140.00" y="537.00" font-family="Liberation Sans, Arial, sans-serif" font-size="8.2" font-weight="normal" fill="#1a1a1a" text-anchor="start"  stroke="#1a1a1a" stroke-width="0.22">-1</text>
<text x="184.00" y="523.80" font-family="Liberation Sans, Arial, sans-serif" font-size="8.3" font-weight="normal" fill="#1a1a1a" text-anchor="start"  stroke="#1a1a1a" stroke-width="0.22" textLength="19.4" lengthAdjust="spacingAndGlyphs">Scale:</text>
<rect x="209.4" y="513.5" width="62.50" height="12.80" fill="#fff" stroke="#9a9a9a" stroke-width="0.7"/>
<text x="213.00" y="522.00" font-family="Liberation Sans, Arial, sans-serif" font-size="8.2" font-weight="normal" fill="#1a1a1a" text-anchor="start"  stroke="#1a1a1a" stroke-width="0.22">50  V/Div</text>
<text x="184.00" y="536.90" font-family="Liberation Sans, Arial, sans-serif" font-size="8.3" font-weight="normal" fill="#1a1a1a" text-anchor="start"  stroke="#1a1a1a" stroke-width="0.22" textLength="40" lengthAdjust="spacingAndGlyphs">Y pos.(Div):</text>
<rect x="228.8" y="528.5" width="31.20" height="16.50" fill="#fff" stroke="#2b8de0" stroke-width="0.7"/>
<text x="233.20" y="537.00" font-family="Liberation Sans, Arial, sans-serif" font-size="8.2" font-weight="normal" fill="#1a1a1a" text-anchor="start"  stroke="#1a1a1a" stroke-width="0.22">1</text>
<rect x="261.0" y="528.4" width="10.4" height="6.0" fill="#f0f0f0" stroke="#d4d4d4" stroke-width="0.6"/>
<rect x="261.0" y="534.9" width="10.4" height="6.4" fill="#f0f0f0" stroke="#d4d4d4" stroke-width="0.6"/>
<path d="M263.9 532.3 L266.2 529.9 L268.5 532.3 Z" fill="#111"/>
<path d="M263.9 536.6 L266.2 539.0 L268.5 536.6 Z" fill="#111"/>
<text x="277.10" y="524.00" font-family="Liberation Sans, Arial, sans-serif" font-size="8.3" font-weight="normal" fill="#1a1a1a" text-anchor="start"  stroke="#1a1a1a" stroke-width="0.22" textLength="18.7" lengthAdjust="spacingAndGlyphs">Edge:</text>
<text x="277.10" y="537.10" font-family="Liberation Sans, Arial, sans-serif" font-size="8.3" font-weight="normal" fill="#1a1a1a" text-anchor="start"  stroke="#1a1a1a" stroke-width="0.22" textLength="18.7" lengthAdjust="spacingAndGlyphs">Level:</text>
<rect x="307.6" y="516.2" width="11.90" height="11.6" fill="#cce4f7" stroke="#2b8de0" stroke-width="0.7"/>
<rect x="320.6" y="516.2" width="11.20" height="11.6" fill="#e1e1e1" stroke="#c8c8c8" stroke-width="0.7"/>
<rect x="335.6" y="516.2" width="12.40" height="11.6" fill="#cce4f7" stroke="#2b8de0" stroke-width="0.7"/>
<text x="341.80" y="524.70" font-family="Liberation Sans, Arial, sans-serif" font-size="8.2" font-weight="normal" fill="#111" text-anchor="middle"  stroke="#111" stroke-width="0.22">A</text>
<rect x="349.4" y="516.2" width="13.10" height="11.6" fill="#cfcfcf" stroke="#c4c4c4" stroke-width="0.7"/>
<text x="355.95" y="524.70" font-family="Liberation Sans, Arial, sans-serif" font-size="8.2" font-weight="normal" fill="#a0a0a0" text-anchor="middle"  stroke="#a0a0a0" stroke-width="0.22">B</text>
<rect x="364.0" y="516.2" width="15.80" height="11.6" fill="#cfcfcf" stroke="#c4c4c4" stroke-width="0.7"/>
<text x="371.90" y="524.70" font-family="Liberation Sans, Arial, sans-serif" font-size="8.2" font-weight="normal" fill="#a0a0a0" text-anchor="middle"  stroke="#a0a0a0" stroke-width="0.22">Ext</text>
<path d="M310.1 524.2 H314.2 L315.0 518.0 H318.0 M312.3 521.6 H315.9" stroke="#111" stroke-width="1.15" fill="none"/>
<path d="M322.5 518.5 H326.6 L327.2 523.6 H329.9 M324.2 521.1 H328.7" stroke="#111" stroke-width="1.15" fill="none"/>
<rect x="307.4" y="529.7" width="54.60" height="15.30" fill="#fff" stroke="#9a9a9a" stroke-width="0.7"/>
<text x="310.60" y="537.90" font-family="Liberation Sans, Arial, sans-serif" font-size="8.2" font-weight="normal" fill="#1a1a1a" text-anchor="start"  stroke="#1a1a1a" stroke-width="0.22">0</text>
<rect x="362.5" y="529.7" width="18.00" height="15.30" fill="#fff" stroke="#9a9a9a" stroke-width="0.7"/>
<text x="366.90" y="537.90" font-family="Liberation Sans, Arial, sans-serif" font-size="8.2" font-weight="normal" fill="#1a1a1a" text-anchor="start"  stroke="#1a1a1a" stroke-width="0.22">V</text>
</g>
</svg>
</body>
</html>
